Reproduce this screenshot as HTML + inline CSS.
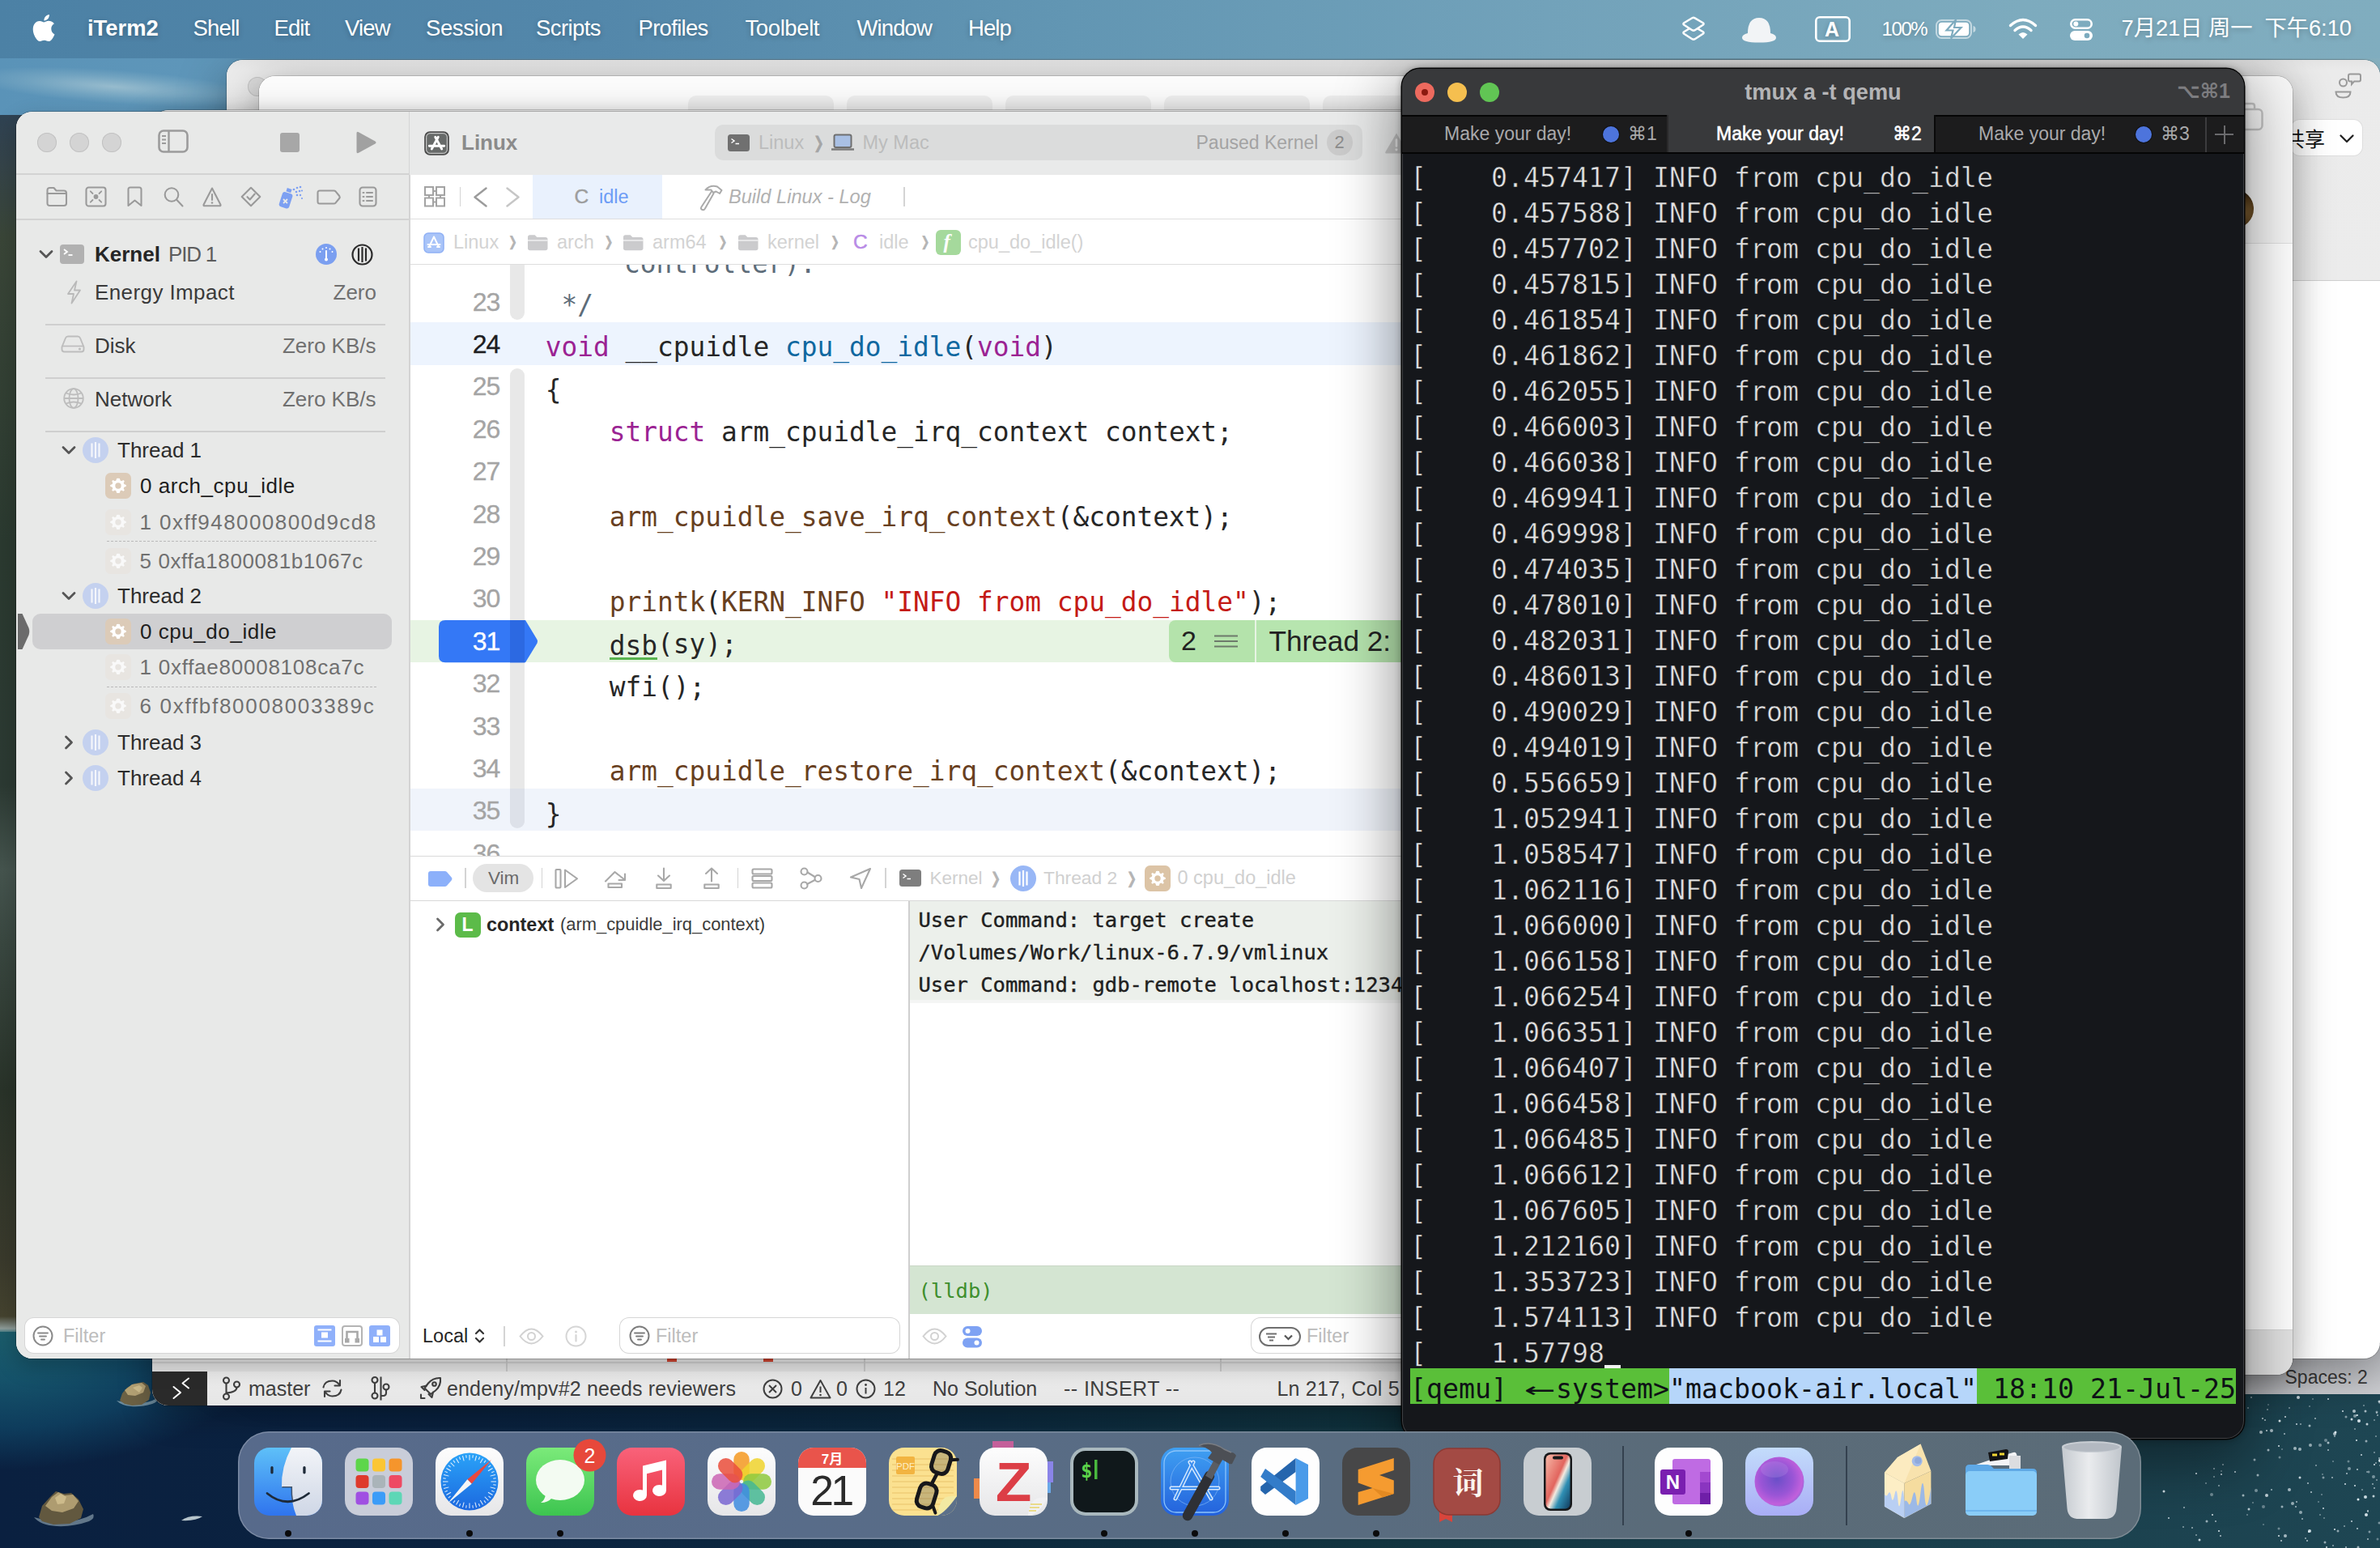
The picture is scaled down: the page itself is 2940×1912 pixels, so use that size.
<!DOCTYPE html>
<html lang="en">
<head>
<meta charset="utf-8">
<title>Desktop</title>
<style>
*{box-sizing:border-box;margin:0;padding:0}
html,body{width:2940px;height:1912px;overflow:hidden;background:#0d2744}
body{position:relative;font-family:"Liberation Sans","Noto Sans CJK SC",sans-serif;color:#222}
.abs{position:absolute}
.t{position:absolute;white-space:pre;line-height:1}
svg{position:absolute;overflow:visible}
/* wallpaper */
#wall{position:absolute;left:0;top:0;width:2940px;height:1912px;
 background:linear-gradient(90deg,#0a2040 0%,#0b2340 20%,#0d2a3e 42%,#12343f 58%,#1a3f4c 80%,#1e4653 100%)}
#sky{position:absolute;left:0;top:0;width:2940px;height:145px;background:linear-gradient(90deg,#5a93b8,#79a9c1 60%,#8ab6c6)}
#cloud{position:absolute;left:-40px;top:86px;width:360px;height:42px;transform:rotate(4deg);background:radial-gradient(ellipse 50% 50% at 50% 50%,rgba(170,200,212,.75),rgba(150,188,205,.35) 60%,transparent 100%)}
#mount{position:absolute;left:0;top:142px;width:60px;height:1505px;background:linear-gradient(180deg,#2f4252 0,#35444a 4%,#3a4638 10%,#2b3a30 35%,#2c3a33 55%,#46554f 62%,#3a4841 68%,#293329 80%,#3a3a2c 94%,#45432f 98.6%,#8f9d9a 99.6%,#2d6f7a 100%)}
#sea1{position:absolute;left:0;top:1645px;width:700px;height:267px;background:radial-gradient(ellipse 340px 170px at 0 0,#1b5d6b 0,#15526a 35%,#0e3c5c 70%,rgba(10,33,66,0) 100%)}
#spark{position:absolute;left:2650px;top:1725px;width:2px;height:2px;border-radius:50%;background:transparent;box-shadow:147px 28px 0 0px rgba(235,245,250,0.74),257px 17px 0 1px rgba(235,245,250,0.7),171px 45px 0 0px rgba(235,245,250,0.68),258px 23px 0 1px rgba(235,245,250,0.48),280px 107px 0 0px rgba(235,245,250,0.59),46px 160px 0 0px rgba(235,245,250,0.52),200px 106px 0 0px rgba(235,245,250,0.69),74px 106px 0 0px rgba(235,245,250,0.46),202px 11px 0 0px rgba(235,245,250,0.39),190px 99px 0 0.5px rgba(235,245,250,0.82),210px 84px 0 0px rgba(235,245,250,0.53),233px 45px 0 1px rgba(235,245,250,0.69),190px 64px 0 1px rgba(235,245,250,0.62),286px 22px 0 0px rgba(235,245,250,0.6),93px 91px 0 0px rgba(235,245,250,0.37),246px 107px 0 0px rgba(235,245,250,0.88),151px 65px 0 0.5px rgba(235,245,250,0.65),132px 130px 0 0px rgba(235,245,250,0.39),223px 185px 0 0px rgba(235,245,250,0.84),237px 165px 0 0.5px rgba(235,245,250,0.56),155px 114px 0 0px rgba(235,245,250,0.65),247px 24px 0 0.5px rgba(235,245,250,0.5),275px 92px 0 0.5px rgba(235,245,250,0.45),202px 165px 0 1px rgba(235,245,250,0.84),134px 77px 0 0.5px rgba(235,245,250,0.57),282px 28px 0 0px rgba(235,245,250,0.46),225px 2px 0 0px rgba(235,245,250,0.85),130px 0px 0 0px rgba(235,245,250,0.6),215px 59px 0 1px rgba(235,245,250,0.43),281px 122px 0 0.5px rgba(235,245,250,0.79),272px 145px 0 1px rgba(235,245,250,0.87),165px 74px 0 0.5px rgba(235,245,250,0.41),151px 9px 0 0px rgba(235,245,250,0.35),199px 177px 0 0px rgba(235,245,250,0.72),267px 114px 0 0px rgba(235,245,250,0.44),282px 112px 0 0px rgba(235,245,250,0.63),262px 185px 0 0.5px rgba(235,245,250,0.63),144px 26px 0 0px rgba(235,245,250,0.8),186px 129px 0 0px rgba(235,245,250,0.66),281px 98px 0 1px rgba(235,245,250,0.44),274px 141px 0 0px rgba(235,245,250,0.53),233px 48px 0 0px rgba(235,245,250,0.57),155px 41px 0 1px rgba(235,245,250,0.67),149px 41px 0 0px rgba(235,245,250,0.84),254px 153px 0 0px rgba(235,245,250,0.79),110px 92px 0 0px rgba(235,245,250,0.79),251px 88px 0 1px rgba(235,245,250,0.47),282px 83px 0 0px rgba(235,245,250,0.91),282px 68px 0 0px rgba(235,245,250,0.48),184px 63px 0 1px rgba(235,245,250,0.64),261px 89px 0 0px rgba(235,245,250,0.74),260px 22px 0 0px rgba(235,245,250,0.58),186px 33px 0 0px rgba(235,245,250,0.82),66px 176px 0 0.5px rgba(235,245,250,0.78),167px 177px 0 0px rgba(235,245,250,0.78),288px 5px 0 0.5px rgba(235,245,250,0.7),254px 27px 0 0.5px rgba(235,245,250,0.85),225px 65px 0 0px rgba(235,245,250,0.68),28px 149px 0 0px rgba(235,245,250,0.79),197px 174px 0 0px rgba(235,245,250,0.61),258px 39px 0 0px rgba(235,245,250,0.5),191px 142px 0 1px rgba(235,245,250,0.55),172px 24px 0 0px rgba(235,245,250,0.9),271px 123px 0 1px rgba(235,245,250,0.84),172px 171px 0 1px rgba(235,245,250,0.65),93px 95px 0 0px rgba(235,245,250,0.87),215px 145px 0 0px rgba(235,245,250,0.44),185px 135px 0 0px rgba(235,245,250,0.68),230px 99px 0 0px rgba(235,245,250,0.64),269px 10px 0 0px rgba(235,245,250,0.46),248px 94px 0 0px rgba(235,245,250,0.69),177px 114px 0 1px rgba(235,245,250,0.65),193px 150px 0 0px rgba(235,245,250,0.65),233px 163px 0 0px rgba(235,245,250,0.92),276px 166px 0 0.5px rgba(235,245,250,0.47),177px 13px 0 0px rgba(235,245,250,0.49),82px 145px 0 0px rgba(235,245,250,0.91),90px 165px 0 0px rgba(235,245,250,0.93),243px 17px 0 0px rgba(235,245,250,0.88),288px 155px 0 0.5px rgba(235,245,250,0.45),288px 75px 0 0px rgba(235,245,250,0.6),145px 135px 0 1px rgba(235,245,250,0.36),181px 131px 0 1px rgba(235,245,250,0.58),218px 95px 0 0px rgba(235,245,250,0.39),285px 19px 0 0px rgba(235,245,250,0.51),273px 33px 0 0.5px rgba(235,245,250,0.8),262px 126px 0 0.5px rgba(235,245,250,0.92),92px 171px 0 0px rgba(235,245,250,0.69),231px 79px 0 0px rgba(235,245,250,0.39),220px 149px 0 0px rgba(235,245,250,0.4),57px 161px 0 0px rgba(235,245,250,0.62),289px 78px 0 1px rgba(235,245,250,0.9),84px 98px 0 0px rgba(235,245,250,0.49),284px 48px 0 0px rgba(235,245,250,0.46),219px 99px 0 0.5px rgba(235,245,250,0.47),191px 33px 0 0px rgba(235,245,250,0.56),289px 6px 0 1px rgba(235,245,250,0.36),202px 35px 0 0.5px rgba(235,245,250,0.63),75px 153px 0 0.5px rgba(235,245,250,0.61),201px 166px 0 0px rgba(235,245,250,0.93),231px 183px 0 0px rgba(235,245,250,0.56),168px 64px 0 0px rgba(235,245,250,0.38),22px 116px 0 0.5px rgba(235,245,250,0.88),261px 162px 0 0px rgba(235,245,250,0.75),213px 129px 0 0px rgba(235,245,250,0.38),95px 83px 0 0px rgba(235,245,250,0.51),285px 102px 0 0px rgba(235,245,250,0.5),150px 15px 0 0px rgba(235,245,250,0.52),125px 145px 0 0px rgba(235,245,250,0.4),90px 109px 0 0px rgba(235,245,250,0.59),142px 43px 0 1px rgba(235,245,250,0.7),263px 29px 0 1px rgba(235,245,250,0.89),164px 60px 0 0px rgba(235,245,250,0.94),136px 115px 0 1px rgba(235,245,250,0.44),219px 137px 0 0px rgba(235,245,250,0.84),274px 140px 0 0px rgba(235,245,250,0.69),258px 109px 0 0px rgba(235,245,250,0.89),221px 179px 0 0.5px rgba(235,245,250,0.58),204px 117px 0 0px rgba(235,245,250,0.73),188px 0px 0 1px rgba(235,245,250,0.83),271px 17px 0 0.5px rgba(235,245,250,0.67),126px 13px 0 0px rgba(235,245,250,0.51),120px 121px 0 0.5px rgba(235,245,250,0.63),62px 170px 0 0px rgba(235,245,250,0.52),217px 120px 0 0px rgba(235,245,250,0.4),149px 121px 0 1px rgba(235,245,250,0.77),206px 2px 0 0px rgba(235,245,250,0.39),285px 18px 0 0.5px rgba(235,245,250,0.48),138px 96px 0 0.5px rgba(235,245,250,0.63),247px 185px 0 0px rgba(235,245,250,0.68),286px 175px 0 0.5px rgba(235,245,250,0.36),62px 94px 0 0px rgba(235,245,250,0.95),164px 171px 0 0px rgba(235,245,250,0.91),209px 26px 0 0px rgba(235,245,250,0.66),86px 153px 0 0px rgba(235,245,250,0.66),234px 43px 0 0.5px rgba(235,245,250,0.89),165px 29px 0 0.5px rgba(235,245,250,0.92),168px 135px 0 0.5px rgba(235,245,250,0.6),145px 157px 0 0px rgba(235,245,250,0.35),261px 22px 0 0px rgba(235,245,250,0.91),272px 54px 0 0.5px rgba(235,245,250,0.57),164px 162px 0 0.5px rgba(235,245,250,0.4),245px 159px 0 0px rgba(235,245,250,0.52),260px 53px 0 0px rgba(235,245,250,0.91),284px 81px 0 0px rgba(235,245,250,0.54),250px 79px 0 0.5px rgba(235,245,250,0.37),274px 175px 0 0px rgba(235,245,250,0.68),47px 136px 0 0px rgba(235,245,250,0.62),222px 53px 0 1px rgba(235,245,250,0.38),84px 88px 0 0px rgba(235,245,250,0.56),127px 138px 0 0.5px rgba(235,245,250,0.74),225px 56px 0 0.5px rgba(235,245,250,0.68),81px 120px 0 1px rgba(235,245,250,0.4),273px 92px 0 0px rgba(235,245,250,0.48),289px 84px 0 0px rgba(235,245,250,0.43),203px 59px 0 1px rgba(235,245,250,0.57),266px 71px 0 0px rgba(235,245,250,0.8)}
/* menubar */
#menubar{position:absolute;left:0;top:0;width:2940px;height:72px;background:linear-gradient(90deg,#4c81a5 0,#5387aa 25%,#6296b3 45%,#72a2ba 65%,#7dabbe 85%,#80adbf 100%)}
#menubar .t{color:#fff;font-size:27.5px;top:21px;text-shadow:0 2px 6px rgba(0,0,0,.25)}
/* windows */
.win{position:absolute;border-radius:20px}
#winA{left:280px;top:74px;width:2660px;height:1604px;background:#fff;box-shadow:0 0 0 1px rgba(0,0,0,.18),0 20px 60px rgba(0,0,0,.35);overflow:hidden}
#winAbar{position:absolute;left:280px;top:1660px;width:2660px;height:62px;background:linear-gradient(180deg,#bfc1c6,#cfd0d4);}
#winB{left:320px;top:94px;width:2512px;height:1604px;background:#fff;box-shadow:0 0 0 1px rgba(0,0,0,.15),0 10px 50px rgba(0,0,0,.35);overflow:hidden}
#vsc{left:188px;top:136px;width:2000px;height:1600px;background:#e3e3e3;border-radius:20px;box-shadow:0 0 0 1px rgba(0,0,0,.2),0 10px 40px rgba(0,0,0,.3);overflow:hidden}
#xc{left:20px;top:138px;width:1900px;height:1540px;background:#fff;box-shadow:0 0 0 1px rgba(0,0,0,.22),0 10px 28px rgba(0,0,0,.22);overflow:hidden}
#term{left:1732px;top:85px;width:1040px;height:1692px;background:#15171b;border-radius:22px;box-shadow:0 0 0 1.5px #050505,inset 0 0 0 1px rgba(255,255,255,.18),0 0 9px 1px rgba(0,0,0,.32),0 22px 75px 8px rgba(0,0,0,.42);overflow:hidden}
#dock{position:absolute;left:294px;top:1768px;width:2351px;height:133px;border-radius:38px;background:linear-gradient(90deg,#576a8b 0,#586c89 30%,#596c80 58%,#5a6b79 75%,#5b6c78 100%);box-shadow:inset 0 0 0 1.5px rgba(255,255,255,.22)}

.tabt{top:69px;font-size:23px;font-family:"Liberation Sans","DejaVu Sans",sans-serif}
.tdot{top:71px;width:20px;height:20px;border-radius:50%;background:#4d74dc;box-shadow:0 0 0 1px rgba(0,0,0,.4)}
#tpre,#tstat{position:absolute;left:10px;font:33.22px/44px "DejaVu Sans Mono","Liberation Mono",monospace;white-space:pre}
#tpre{top:113px;color:#e2e2e2;-webkit-text-stroke:.5px #15171b}
#tstat{top:1609px;color:#0e1116}
.arr{display:inline-block;width:40px;text-align:center;transform:scaleX(1.9)}
#xci{position:absolute;left:-20px;top:-138px;width:2940px;height:1912px}
.vst{top:1566.8px;font-size:25px;color:#3f3f3f}
</style>
</head>
<body>
<div id="wall"></div>
<div id="sky"></div>
<div id="mount"></div>
<div id="sea1"></div>
<div id="cloud"></div>
<div id="spark"></div>
<svg style="left:140px;top:1700px" width="60" height="46" viewBox="0 0 60 46"><path d="M4 30q6 6 18 7t26-3q8-3 6-7-10 6-24 6T4 30z" fill="#b9cdd3" opacity=".55"/><path d="M8 30l3-9 6-7 9-5 11-2 6 4 3 9-2 9-9 6-12 1-9-2z" fill="#6d6245"/><path d="M14 17l9-7 12-2 5 4-3 8-10 4-9-1z" fill="#b7a476"/><path d="M24 14l8-3 4 3-4 6z" fill="#d2c08f"/></svg>
<svg style="left:38px;top:1832px" width="84" height="60" viewBox="0 0 84 60"><path d="M4 42q8 10 28 11t40-6q8-4 5-9-16 9-36 9T4 42z" fill="#b9cdd3" opacity=".5"/><path d="M10 42l4-14 9-10 8-8 10 3 9-1 9 8 6 12-3 11-14 7-20 1-14-4z" fill="#62583f"/><path d="M18 28l8-11 8-6 8 4 10-1 7 8-6 9-14 5-13-2z" fill="#ae9c70"/><path d="M30 18l7-5 7 4-3 8-8 1z" fill="#cdbb8b"/></svg>
<svg style="left:222px;top:1870px" width="30" height="12" viewBox="0 0 30 12"><path d="M2 8q10-7 26-5-8 6-26 5z" fill="#c9d6da" opacity=".9"/></svg>
<div id="winAbar"></div>
<div class="t" style="left:2822.5px;top:1690px;font-size:23px;color:#3a3a3a">Spaces: 2</div>
<div class="win" id="winA">
 <div class="abs" style="left:0;top:0;width:2660px;height:273px;background:linear-gradient(180deg,#e4e4e4 0,#ebebeb 14px,#ececec 100%);border-bottom:1.5px solid #cfcfcf"></div>
 <div class="abs" style="left:26px;top:21px;width:24px;height:24px;border-radius:50%;background:#dcdcdc;box-shadow:inset 0 0 0 1px #c6c6c6"></div>
 <div class="abs" style="left:2550px;top:74px;width:88px;height:44px;border-radius:11px;background:#fff;box-shadow:0 0 0 1px #dedede"></div>
 <div class="t" style="left:2542px;top:83.500px;font-size:25px;color:#111;font-family:'Noto Sans CJK SC','Liberation Sans',sans-serif">共享</div>
 <svg style="left:2610px;top:92px" width="18" height="11" viewBox="0 0 18 11"><path d="M1.500 1.500l7.500 7.500 7.500-7.500" fill="none" stroke="#222" stroke-width="2.300" stroke-linecap="round" stroke-linejoin="round"/></svg>
 <svg style="left:2604px;top:16px" width="33" height="32" viewBox="0 0 33 32"><g fill="none" stroke="#9a9a9a" stroke-width="2"><circle cx="10.500" cy="12" r="4.500"/><path d="M1.500 23.500q0 7 9 7t9-7z"/><path d="M19 1.500h11q2 0 2 2v5q0 2-2 2h-6l-3 3.500v-3.500h-2q-2 0-2-2v-5q0-2 2-2z"/></g></svg>
</div>
<div class="win" id="winB">
 <div class="abs" style="left:0;top:0;width:2512px;height:207px;background:#f7f7f7;border-bottom:1.5px solid #e2e2e2"></div>
 <div class="abs" style="left:0;top:0;width:1500px;height:60px;background:#fbfbfb"></div>
 <div class="abs" style="left:530px;top:24px;width:180px;height:40px;border-radius:10px;background:#eeeeee"></div>
 <div class="abs" style="left:726px;top:24px;width:180px;height:40px;border-radius:10px;background:#eeeeee"></div>
 <div class="abs" style="left:922px;top:24px;width:180px;height:40px;border-radius:10px;background:#eeeeee"></div>
 <div class="abs" style="left:1118px;top:24px;width:180px;height:40px;border-radius:10px;background:#eeeeee"></div>
 <div class="abs" style="left:1314px;top:24px;width:180px;height:40px;border-radius:10px;background:#eeeeee"></div>
 <div class="abs" style="left:2416px;top:140px;width:48px;height:48px;border-radius:50%;background:radial-gradient(circle at 70% 60%,#8a6a3a 0,#5a3f1c 40%,#0c0906 70%)"></div>
 <svg style="left:2440px;top:32px" width="36" height="36" viewBox="0 0 36 36"><g fill="none" stroke="#c4c4c4" stroke-width="2.500"><rect x="1.500" y="9" width="33" height="25" rx="5"/><path d="M11 9V5q0-3 3-3h8q3 0 3 3v4"/></g></svg>
 <div class="abs" style="left:0;top:1548px;width:2512px;height:56px;background:#e3e3e3;border-top:1px solid #d6d6d6"></div>
</div>
<div class="win" id="vsc">
 <div class="abs" style="left:0;top:0;width:2000px;height:1558px;background:#e2e2e2"></div>
 <div class="abs" style="left:0;top:1546px;width:2000px;height:1.5px;background:#cfcfcf"></div>
 <div class="abs" style="left:437px;top:1540px;width:1.5px;height:18px;background:#c8c8c8"></div>
 <div class="abs" style="left:879px;top:1540px;width:1.5px;height:18px;background:#c8c8c8"></div>
 <div class="abs" style="left:1319px;top:1540px;width:1.5px;height:18px;background:#c8c8c8"></div>
 <div class="abs" style="left:636px;top:1542px;width:12px;height:4px;background:#c8402c"></div>
 <div class="abs" style="left:755px;top:1542px;width:12px;height:4px;background:#c8402c"></div>
 <div class="abs" style="left:0;top:1558px;width:2000px;height:42px;background:linear-gradient(180deg,#ececec,#e6e6e6)"></div>
 <div class="abs" style="left:0;top:1558px;width:68px;height:42px;background:#2a2a2a"></div>
 <svg style="left:25px;top:1565px" width="22" height="28" viewBox="0 0 22 28"><path d="M1.500 12l8.500 7-8.500 7M20 1.500l-7.500 6 7.500 6" fill="none" stroke="#fff" stroke-width="2" stroke-linecap="round" stroke-linejoin="round"/></svg>
 <svg style="left:86px;top:1564px" width="24" height="30" viewBox="0 0 24 30"><g fill="none" stroke="#3f3f3f" stroke-width="2.100"><circle cx="5.500" cy="5" r="3.500"/><circle cx="5.500" cy="25" r="3.500"/><circle cx="18.500" cy="10" r="3.500"/><path d="M5.500 8.500v13M18.500 13.500q0 6-13 7"/></g></svg>
 <div class="t vst" style="left:119px">master</div>
 <svg style="left:208px;top:1566px" width="29" height="26" viewBox="0 0 29 26"><g fill="none" stroke="#3f3f3f" stroke-width="2.100" stroke-linecap="round" stroke-linejoin="round"><path d="M3.500 11.500q1.500-8 11-8 5.500 0 9 5.500M25.500 14.500q-1.500 8-11 8-5.500 0-9-5.500"/><path d="M24 3v6.500h-6.500M5 23v-6.500h6.500"/></g></svg>
 <svg style="left:269px;top:1563px" width="25" height="32" viewBox="0 0 25 32"><g fill="none" stroke="#3f3f3f" stroke-width="2.100"><circle cx="6" cy="5.500" r="3.500"/><circle cx="6" cy="25" r="3.500"/><circle cx="20" cy="14" r="3.500"/><path d="M6 9v12.500M13.500 1.500v29M20 17.500v4q0 3-3 3.500h-3.500"/></g></svg>
 <svg style="left:330px;top:1564px" width="28" height="30" viewBox="0 0 28 30"><g fill="none" stroke="#3f3f3f" stroke-width="2.100" stroke-linejoin="round" stroke-linecap="round"><path d="M26 2q-9-.500-15 6.500L6.500 14.500l7.500 7.500 6-4.500q7-6 6-15.500z"/><path d="M9 11.500l-6.500 1.500 4 4M17 19.500l-1.500 6.500-4-4M2 22.500v4.500h4.500"/><circle cx="18.500" cy="9.500" r="2.300"/></g></svg>
 <div class="t vst" style="left:364px;letter-spacing:.15px">endeny/mpv#2 needs reviewers</div>
 <svg style="left:754px;top:1567px" width="25" height="25" viewBox="0 0 25 25"><g fill="none" stroke="#3f3f3f" stroke-width="2"><circle cx="12.500" cy="12.500" r="11"/><path d="M8 8l9 9M17 8l-9 9"/></g></svg>
 <div class="t vst" style="left:789px">0</div>
 <svg style="left:812px;top:1567px" width="27" height="25" viewBox="0 0 27 25"><g fill="none" stroke="#3f3f3f" stroke-width="2" stroke-linejoin="round"><path d="M13.500 2L25.500 23.500H1.500z"/><path d="M13.500 9.500v7.500"/></g><circle cx="13.500" cy="20" r="1.300" fill="#3f3f3f"/></svg>
 <div class="t vst" style="left:845px">0</div>
 <svg style="left:869px;top:1567px" width="25" height="25" viewBox="0 0 25 25"><g fill="none" stroke="#3f3f3f" stroke-width="2"><circle cx="12.500" cy="12.500" r="11"/><path d="M12.500 11v7.500"/></g><circle cx="12.500" cy="7.500" r="1.400" fill="#3f3f3f"/></svg>
 <div class="t vst" style="left:903px">12</div>
 <div class="t vst" style="left:964px">No Solution</div>
 <div class="t vst" style="left:1126px;letter-spacing:.45px">-- INSERT --</div>
 <div class="t vst" style="left:1389.500px;letter-spacing:.2px">Ln 217, Col 5</div>
</div>
<div class="win" id="xc"><div id="xci">
<div class="abs" style="left:20px;top:138px;width:486px;height:1540px;background:#e8e9e8;"></div>
<div class="abs" style="left:505px;top:138px;width:1.5px;height:1540px;background:#d4d4d4;"></div>
<div class="abs" style="left:506px;top:138px;width:1400px;height:78px;background:#e9eaea;"></div>
<div class="abs" style="left:20px;top:213.5px;width:485px;height:2px;background:#d3d3d3;"></div>
<div class="abs" style="left:20px;top:270px;width:485px;height:2px;background:#d3d3d3;"></div>
<div class="abs" style="left:46px;top:164px;width:24px;height:24px;background:#d4d4d4;border-radius:50%;box-shadow:inset 0 0 0 1px #c2c2c2"></div>
<div class="abs" style="left:86px;top:164px;width:24px;height:24px;background:#d4d4d4;border-radius:50%;box-shadow:inset 0 0 0 1px #c2c2c2"></div>
<div class="abs" style="left:126px;top:164px;width:24px;height:24px;background:#d4d4d4;border-radius:50%;box-shadow:inset 0 0 0 1px #c2c2c2"></div>
<svg style="left:195px;top:160px;" width="38" height="29" viewBox="0 0 38 29"><rect x="1.5" y="1.5" width="35" height="26" rx="5.5" fill="none" stroke="#9b9b9b" stroke-width="2.6"/><path d="M13.5 2v25" stroke="#9b9b9b" stroke-width="2.4"/><path d="M5 8h5M5 12.5h5M5 17h5" stroke="#9b9b9b" stroke-width="1.8"/></svg>
<div class="abs" style="left:346px;top:164px;width:24px;height:24px;background:#a7a7a7;border-radius:3px"></div>
<svg style="left:438px;top:161px;" width="29" height="30" viewBox="0 0 29 30"><path d="M2.5 3.5 L2.5 26.5 Q2.5 29 5 27.7 L25.5 16.6 Q27.5 15 25.5 13.4 L5 2.3 Q2.5 1 2.5 3.5Z" fill="#a1a1a1"/></svg>
<svg style="left:57px;top:230px;" width="27" height="26" viewBox="0 0 27 26"><path d="M1.5 7.5V5q0-3 3-3h5l3 3.5h9.5q3 0 3 3V21q0 3-3 3h-17.5q-3 0-3-3z" fill="none" stroke="#9a9a9a" stroke-width="2.1" stroke-linejoin="round" stroke-linecap="round"/><path d="M1.5 9h23.5" fill="none" stroke="#9a9a9a" stroke-width="2.1" stroke-linejoin="round" stroke-linecap="round"/></svg>
<svg style="left:104.5px;top:230px;" width="27" height="26" viewBox="0 0 27 26"><rect x="1.5" y="1.5" width="24" height="23" rx="3" fill="none" stroke="#9a9a9a" stroke-width="2.1" stroke-linejoin="round" stroke-linecap="round"/><path d="M6.800 6.300l2.700 2.700M20.200 6.300l-2.700 2.700M6.800 19.700l2.700-2.700M20.200 19.700l-2.700-2.700" fill="none" stroke="#9a9a9a" stroke-width="1.800" stroke-linecap="round"/><circle cx="13.500" cy="13" r="2.900" fill="#9a9a9a"/></svg>
<svg style="left:156.5px;top:230px;" width="19" height="26" viewBox="0 0 19 26"><path d="M1.5 24V4q0-2.5 2.5-2.5h11q2.5 0 2.5 2.5v20l-8-6.5z" fill="none" stroke="#9a9a9a" stroke-width="2.1" stroke-linejoin="round" stroke-linecap="round"/></svg>
<svg style="left:202px;top:230px;" width="25" height="26" viewBox="0 0 25 26"><circle cx="10" cy="10.5" r="8.3" fill="none" stroke="#9a9a9a" stroke-width="2.1" stroke-linejoin="round" stroke-linecap="round"/><path d="M16.5 17l7 7.5" fill="none" stroke="#9a9a9a" stroke-width="2.1" stroke-linejoin="round" stroke-linecap="round" stroke-width="2.8"/></svg>
<svg style="left:250px;top:230px;" width="24" height="26" viewBox="0 0 24 26"><path d="M12 2.5L22.3 22.5q.8 1.8-1.2 1.8H2.9q-2 0-1.2-1.8z" fill="none" stroke="#9a9a9a" stroke-width="2.1" stroke-linejoin="round" stroke-linecap="round"/><path d="M12 10v7" fill="none" stroke="#9a9a9a" stroke-width="2.1" stroke-linejoin="round" stroke-linecap="round"/><circle cx="12" cy="20.5" r="1.3" fill="#9a9a9a"/></svg>
<svg style="left:297px;top:230px;" width="26" height="26" viewBox="0 0 26 26"><path d="M13 1.8L24.3 13 13 24.2 1.7 13z" fill="none" stroke="#9a9a9a" stroke-width="2.1" stroke-linejoin="round" stroke-linecap="round"/><path d="M8.5 13.2l3.2 3.3 6-7" fill="none" stroke="#9a9a9a" stroke-width="2.1" stroke-linejoin="round" stroke-linecap="round"/></svg>
<svg style="left:343px;top:229px;" width="32" height="28" viewBox="0 0 32 28"><g transform="rotate(18 11 17)"><rect x="4" y="9" width="13" height="19" rx="3" fill="#7da0f2"/><rect x="7.5" y="3.5" width="6" height="4.5" fill="#7da0f2"/></g><path d="M7 17l5 5M12 17l-5 5" stroke="#e8e9e8" stroke-width="1.8"/><g fill="#7da0f2"><circle cx="20" cy="5" r="1.3"/><circle cx="24" cy="3" r="1.3"/><circle cx="28" cy="2" r="1.3"/><circle cx="23" cy="8" r="1.3"/><circle cx="27" cy="7" r="1.3"/><circle cx="30" cy="6.5" r="1.1"/><circle cx="24" cy="12" r="1.3"/><circle cx="28" cy="12" r="1.2"/><circle cx="30" cy="16" r="1.1"/></g></svg>
<svg style="left:391px;top:234px;" width="30" height="19" viewBox="0 0 30 19"><path d="M1.5 4q0-2.5 2.5-2.5h17.5q1.2 0 2 .8l4.7 5.7q1 1.5 0 3l-4.7 5.7q-.8.8-2 .8H4q-2.5 0-2.5-2.5z" fill="none" stroke="#9a9a9a" stroke-width="2.1" stroke-linejoin="round" stroke-linecap="round"/></svg>
<svg style="left:443px;top:230px;" width="23" height="26" viewBox="0 0 23 26"><rect x="1.5" y="1.5" width="20" height="23" rx="3.5" fill="none" stroke="#9a9a9a" stroke-width="2.1" stroke-linejoin="round" stroke-linecap="round"/><path d="M10 8h7M10 13h7M10 18h7" fill="none" stroke="#9a9a9a" stroke-width="2.1" stroke-linejoin="round" stroke-linecap="round" stroke-width="2"/><path d="M5.5 8h1M5.5 13h1M5.5 18h1" fill="none" stroke="#9a9a9a" stroke-width="2.1" stroke-linejoin="round" stroke-linecap="round" stroke-width="2"/></svg>
<svg style="left:47.5px;top:308px;" width="18" height="12" viewBox="0 0 18 12"><path d="M2 2.5l7 7 7-7" fill="none" stroke="#555" stroke-width="2.8" stroke-linecap="round" stroke-linejoin="round"/></svg>
<svg style="left:74px;top:302px;" width="30" height="24" viewBox="0 0 30 24"><rect x="0" y="0" width="30" height="24" rx="4" fill="#b1b1b1"/><path d="M5 6l4 3-4 3" fill="none" stroke="#fff" stroke-width="1.8"/><path d="M10.5 13h5" stroke="#fff" stroke-width="1.8"/></svg>
<div class="t " style="left:117px;top:301.3px;font-size:26px;color:#262626;font-weight:700">Kernel</div>
<div class="t " style="left:208px;top:301.3px;font-size:26px;color:#5c5c5c;letter-spacing:-1.2px">PID 1</div>
<svg style="left:390px;top:301px;" width="26" height="26" viewBox="0 0 26 26"><circle cx="13" cy="13" r="13" fill="#7b9ff0"/><path d="M13 9v10" stroke="#fff" stroke-width="2" stroke-linecap="round"/><circle cx="13" cy="19.5" r="2" fill="#fff"/><g fill="#fff"><circle cx="13" cy="5" r="1"/><circle cx="8.5" cy="6.5" r="1"/><circle cx="17.5" cy="6.5" r="1"/><circle cx="5.500" cy="10" r="1"/><circle cx="20.5" cy="10" r="1"/></g></svg>
<svg style="left:433.5px;top:300.5px;" width="27" height="27" viewBox="0 0 27 27"><circle cx="13.5" cy="13.5" r="12" fill="none" stroke="#2b2b2b" stroke-width="2.2"/><path d="M9 5.500v16M13.500 4v19M18 5.500v16" stroke="#2b2b2b" stroke-width="2.2"/></svg>
<svg style="left:82px;top:346px;" width="19" height="30" viewBox="0 0 19 30"><path d="M12.500 1.500L2 17h7L6.500 28.500 17 12.500h-7z" fill="none" stroke="#b9b9b9" stroke-width="1.8" stroke-linejoin="round"/></svg>
<div class="t " style="left:117px;top:348.3px;font-size:26px;color:#3a3a3a;letter-spacing:.4px">Energy Impact</div>
<div class="t" style="right:2475px;top:348.3px;font-size:26px;color:#707070;">Zero</div>
<div class="abs" style="left:56px;top:400px;width:420px;height:1.8px;background:#cfcfcf;"></div>
<div class="abs" style="left:56px;top:466.3px;width:420px;height:1.8px;background:#cfcfcf;"></div>
<div class="abs" style="left:56px;top:532px;width:420px;height:1.8px;background:#cfcfcf;"></div>
<svg style="left:75px;top:414px;" width="30" height="22" viewBox="0 0 30 22"><path d="M1.500 14.500L6 3.500q.8-2 3-2h12q2.200 0 3 2l4.500 11v3q0 3-3 3h-21q-3 0-3-3z" fill="none" stroke="#bdbdbd" stroke-width="1.9" stroke-linejoin="round"/><path d="M1.500 13.500h27" stroke="#bdbdbd" stroke-width="1.7"/><circle cx="23.500" cy="17" r="1.600" fill="#bdbdbd"/></svg>
<div class="t " style="left:117px;top:414.3px;font-size:26px;color:#3a3a3a;">Disk</div>
<div class="t" style="right:2475.5px;top:414.3px;font-size:26px;color:#707070;">Zero KB/s</div>
<svg style="left:78px;top:478.5px;" width="26" height="26" viewBox="0 0 26 26"><g fill="none" stroke="#bdbdbd" stroke-width="1.800"><circle cx="13" cy="13" r="11.800"/><ellipse cx="13" cy="13" rx="5.500" ry="11.800"/><path d="M1.500 13h23M3.500 6.500q9.500 4 19 0M3.500 19.500q9.500-4 19 0"/></g></svg>
<div class="t " style="left:117px;top:480.3px;font-size:26px;color:#3a3a3a;">Network</div>
<div class="t" style="right:2475.5px;top:480.3px;font-size:26px;color:#707070;">Zero KB/s</div>
<div class="abs" style="left:40px;top:758px;width:444px;height:44px;background:#cfcfd1;border-radius:10px"></div>
<svg style="left:22px;top:758px;" width="15" height="44" viewBox="0 0 15 44"><path d="M0 0h5.500l8 17.500q1.500 4.500 0 9l-8 17.500H0z" fill="#6b6b6b"/></svg>
<svg style="left:76px;top:550px;" width="18" height="12" viewBox="0 0 18 12"><path d="M2 2.5l7 7 7-7" fill="none" stroke="#555" stroke-width="2.8" stroke-linecap="round" stroke-linejoin="round"/></svg>
<svg style="left:102px;top:540px;" width="32" height="32" viewBox="0 0 32 32"><circle cx="16" cy="16" r="16" fill="#c4d1ef"/><path d="M11.500 7.500v17M16 6v20M20.500 7.500v17" stroke="#f4f6fb" stroke-width="2.200"/></svg>
<div class="t " style="left:145px;top:543.3px;font-size:26px;color:#2c2c2c;">Thread 1</div>
<svg style="left:130px;top:584px;" width="32" height="32" viewBox="0 0 32 32"><rect width="32" height="32" rx="6.500" fill="#dccbb8"/><path fill="#fff" d="M16 6.800l1.900.2.700 2.500 1.500.650 2.300-1.250 1.400 1.300-1.100 2.350.650 1.500 2.450.85v1.900l-2.450.85-.650 1.500 1.100 2.350-1.400 1.300-2.300-1.250-1.500.650-.700 2.500-1.900.2-1.900-.2-.700-2.500-1.500-.650-2.300 1.250-1.400-1.300 1.100-2.350-.650-1.500-2.450-.85v-1.900l2.450-.85.650-1.500-1.100-2.350 1.400-1.300 2.300 1.250 1.500-.650.700-2.500zM16 12.300a3.700 3.700 0 100 7.400 3.700 3.700 0 000-7.400z"/></svg>
<div class="t " style="left:173px;top:587.3px;font-size:26px;color:#1e1e1e;letter-spacing:.55px">0 arch_cpu_idle</div>
<svg style="left:130px;top:628.5px;opacity:.75;" width="32" height="32" viewBox="0 0 32 32"><rect width="32" height="32" rx="6.500" fill="#e9e4df"/><path fill="#fff" d="M16 6.800l1.900.2.700 2.500 1.500.650 2.300-1.250 1.400 1.300-1.100 2.350.650 1.500 2.450.85v1.900l-2.450.85-.650 1.500 1.100 2.350-1.400 1.300-2.300-1.250-1.500.650-.700 2.500-1.900.2-1.900-.2-.700-2.500-1.500-.650-2.300 1.250-1.400-1.300 1.100-2.350-.650-1.500-2.450-.85v-1.900l2.450-.85.650-1.500-1.100-2.350 1.400-1.300 2.300 1.250 1.500-.650.700-2.500zM16 12.300a3.700 3.700 0 100 7.400 3.700 3.700 0 000-7.400z"/></svg>
<div class="t " style="left:172.5px;top:631.8px;font-size:26px;color:#707070;letter-spacing:1.45px">1 0xff948000800d9cd8</div>
<svg style="left:130px;top:676.5px;opacity:.75;" width="32" height="32" viewBox="0 0 32 32"><rect width="32" height="32" rx="6.500" fill="#e9e4df"/><path fill="#fff" d="M16 6.800l1.900.2.700 2.500 1.500.650 2.300-1.250 1.400 1.300-1.100 2.350.650 1.500 2.450.85v1.900l-2.450.85-.650 1.500 1.100 2.350-1.400 1.300-2.300-1.250-1.500.650-.700 2.500-1.900.2-1.900-.2-.700-2.500-1.500-.650-2.300 1.250-1.400-1.300 1.100-2.350-.650-1.500-2.450-.85v-1.900l2.450-.85.650-1.500-1.100-2.350 1.400-1.300 2.300 1.250 1.500-.650.700-2.500zM16 12.300a3.700 3.700 0 100 7.400 3.700 3.700 0 000-7.400z"/></svg>
<div class="t " style="left:172.5px;top:679.8px;font-size:26px;color:#707070;letter-spacing:0.6px">5 0xffa1800081b1067c</div>
<svg style="left:76px;top:730px;" width="18" height="12" viewBox="0 0 18 12"><path d="M2 2.5l7 7 7-7" fill="none" stroke="#555" stroke-width="2.8" stroke-linecap="round" stroke-linejoin="round"/></svg>
<svg style="left:102px;top:720px;" width="32" height="32" viewBox="0 0 32 32"><circle cx="16" cy="16" r="16" fill="#c4d1ef"/><path d="M11.500 7.500v17M16 6v20M20.500 7.500v17" stroke="#f4f6fb" stroke-width="2.200"/></svg>
<div class="t " style="left:145px;top:723.3px;font-size:26px;color:#2c2c2c;">Thread 2</div>
<svg style="left:130px;top:764px;" width="32" height="32" viewBox="0 0 32 32"><rect width="32" height="32" rx="6.500" fill="#dccbb8"/><path fill="#fff" d="M16 6.800l1.900.2.700 2.500 1.500.650 2.300-1.250 1.400 1.300-1.100 2.350.650 1.500 2.450.85v1.900l-2.450.85-.650 1.500 1.100 2.350-1.400 1.300-2.300-1.250-1.500.650-.700 2.500-1.900.2-1.900-.2-.700-2.500-1.500-.650-2.300 1.250-1.400-1.300 1.100-2.350-.650-1.500-2.450-.85v-1.900l2.450-.85.650-1.500-1.100-2.350 1.400-1.300 2.300 1.250 1.500-.650.700-2.500zM16 12.300a3.700 3.700 0 100 7.400 3.700 3.700 0 000-7.400z"/></svg>
<div class="t " style="left:173px;top:767.3px;font-size:26px;color:#1e1e1e;letter-spacing:.55px">0 cpu_do_idle</div>
<svg style="left:130px;top:808px;opacity:.75;" width="32" height="32" viewBox="0 0 32 32"><rect width="32" height="32" rx="6.500" fill="#e9e4df"/><path fill="#fff" d="M16 6.800l1.900.2.700 2.500 1.500.650 2.300-1.250 1.400 1.300-1.100 2.350.650 1.500 2.450.85v1.900l-2.450.85-.650 1.500 1.100 2.350-1.400 1.300-2.300-1.250-1.500.650-.700 2.500-1.900.2-1.900-.2-.700-2.500-1.500-.650-2.300 1.250-1.400-1.300 1.100-2.350-.650-1.500-2.450-.85v-1.900l2.450-.85.650-1.500-1.100-2.350 1.400-1.300 2.300 1.250 1.500-.650.700-2.500zM16 12.300a3.700 3.700 0 100 7.400 3.700 3.700 0 000-7.400z"/></svg>
<div class="t " style="left:172.5px;top:811.3px;font-size:26px;color:#707070;letter-spacing:0.75px">1 0xffae80008108ca7c</div>
<svg style="left:130px;top:856px;opacity:.75;" width="32" height="32" viewBox="0 0 32 32"><rect width="32" height="32" rx="6.500" fill="#e9e4df"/><path fill="#fff" d="M16 6.800l1.900.2.700 2.500 1.500.650 2.300-1.250 1.400 1.300-1.100 2.350.650 1.500 2.450.85v1.900l-2.450.85-.650 1.500 1.100 2.350-1.400 1.300-2.300-1.250-1.500.650-.700 2.500-1.900.2-1.900-.2-.700-2.500-1.500-.650-2.300 1.250-1.400-1.300 1.100-2.350-.650-1.500-2.450-.85v-1.900l2.450-.85.650-1.500-1.100-2.350 1.400-1.300 2.300 1.250 1.500-.650.700-2.500zM16 12.300a3.700 3.700 0 100 7.400 3.700 3.700 0 000-7.400z"/></svg>
<div class="t " style="left:172.5px;top:859.3px;font-size:26px;color:#707070;letter-spacing:1.7px">6 0xffbf80008003389c</div>
<svg style="left:79px;top:907.5px;" width="12" height="18" viewBox="0 0 12 18"><path d="M2.5 2l7 7-7 7" fill="none" stroke="#555" stroke-width="2.8" stroke-linecap="round" stroke-linejoin="round"/></svg>
<svg style="left:102px;top:900.5px;" width="32" height="32" viewBox="0 0 32 32"><circle cx="16" cy="16" r="16" fill="#c4d1ef"/><path d="M11.500 7.500v17M16 6v20M20.500 7.500v17" stroke="#f4f6fb" stroke-width="2.200"/></svg>
<div class="t " style="left:145px;top:903.8px;font-size:26px;color:#2c2c2c;">Thread 3</div>
<svg style="left:79px;top:952px;" width="12" height="18" viewBox="0 0 12 18"><path d="M2.5 2l7 7-7 7" fill="none" stroke="#555" stroke-width="2.8" stroke-linecap="round" stroke-linejoin="round"/></svg>
<svg style="left:102px;top:945px;" width="32" height="32" viewBox="0 0 32 32"><circle cx="16" cy="16" r="16" fill="#c4d1ef"/><path d="M11.500 7.500v17M16 6v20M20.500 7.500v17" stroke="#f4f6fb" stroke-width="2.200"/></svg>
<div class="t " style="left:145px;top:948.3px;font-size:26px;color:#2c2c2c;">Thread 4</div>
<div class="abs" style="left:132px;top:668.3px;width:333px;height:0;border-top:1.800px dashed #b9b9b9"></div>
<div class="abs" style="left:132px;top:848.3px;width:333px;height:0;border-top:1.800px dashed #b9b9b9"></div>
<div class="abs" style="left:30.5px;top:1628px;width:462.5px;height:43px;background:#fff;border-radius:11px;box-shadow:0 0 0 1px #d6d6d6"></div>
<svg style="left:40px;top:1637px;" width="26" height="26" viewBox="0 0 26 26"><circle cx="13" cy="13" r="11.500" fill="none" stroke="#8a8a8a" stroke-width="2"/><path d="M7 9.500h12M9 13.500h8M11 17.500h4" stroke="#8a8a8a" stroke-width="1.900" stroke-linecap="round"/></svg>
<div class="t " style="left:78px;top:1638.5px;font-size:23.5px;color:#bcbcbc;">Filter</div>
<svg style="left:388px;top:1637px;" width="26" height="26" viewBox="0 0 26 26"><rect width="26" height="26" rx="3" fill="#8fb0fa"/><rect x="9" y="8.500" width="8" height="7" fill="#fff"/><path d="M4.500 5.500h17M4.500 19.500h17" stroke="#fff" stroke-width="2"/></svg>
<svg style="left:422px;top:1637px;" width="26" height="26" viewBox="0 0 26 26"><rect x="1" y="1" width="24" height="24" rx="3" fill="none" stroke="#b4b4b4" stroke-width="2"/><path d="M6.500 18v-10h13v10" fill="none" stroke="#a9a9a9" stroke-width="2.600"/><rect x="4" y="16" width="5.500" height="5.500" fill="#a9a9a9"/><rect x="16.500" y="16" width="5.500" height="5.500" fill="#a9a9a9"/></svg>
<svg style="left:456px;top:1637px;" width="26" height="26" viewBox="0 0 26 26"><rect width="26" height="26" rx="3" fill="#8fb0fa"/><rect x="9.500" y="5.500" width="7" height="7" fill="#fff"/><rect x="5" y="14" width="7" height="7" fill="#fff"/><rect x="14" y="14" width="7" height="7" fill="#fff"/></svg>
<div class="abs" style="left:506.5px;top:215.5px;width:1400px;height:1463px;background:#fff;"></div>
<svg style="left:523.5px;top:161.5px;" width="31" height="30" viewBox="0 0 31 30"><rect x="1" y="1" width="29" height="28" rx="6" fill="#676a69" stroke="#4a4a4a" stroke-width="1.600"/><rect x="2.700" y="2.700" width="25.600" height="24.600" rx="4.600" fill="none" stroke="#e6e6e6" stroke-width=".900"/><path d="M17.300 7.300L9.300 22M13.700 7.300L21.700 22M6.300 18.300h18.400" fill="none" stroke="#fff" stroke-width="2.900" stroke-linecap="round"/></svg>
<div class="t " style="left:570px;top:163.3px;font-size:26px;color:#8b8b8b;font-weight:700">Linux</div>
<div class="abs" style="left:883px;top:154px;width:800px;height:43.5px;background:#dbdcdc;border-radius:10px"></div>
<svg style="left:898.5px;top:166px;" width="27" height="21" viewBox="0 0 27 21"><rect width="27" height="21" rx="3.500" fill="#707070"/><path d="M4.500 5.500l3.500 2.500-3.500 2.500" fill="none" stroke="#fff" stroke-width="1.500"/><path d="M9.500 11.500h4.500" stroke="#fff" stroke-width="1.500"/></svg>
<div class="t " style="left:937px;top:164.5px;font-size:23.5px;color:#bcbcbc;">Linux</div>
<div class="t " style="left:1003px;top:166.2px;font-size:20px;color:#a5a5a5;font-family:'DejaVu Sans',sans-serif;-webkit-text-stroke:.8px #a5a5a5">❭</div>
<svg style="left:1027px;top:165px;" width="28" height="22" viewBox="0 0 28 22"><rect x="3.500" y="1.500" width="21" height="15.500" rx="2" fill="#a9c0e4" stroke="#6f6f6f" stroke-width="2"/><path d="M0 19.500h28" stroke="#7a7a7a" stroke-width="2.600"/></svg>
<div class="t " style="left:1065.5px;top:164.5px;font-size:23.5px;color:#bcbcbc;">My Mac</div>
<div class="t " style="left:1477.5px;top:164.8px;font-size:23px;color:#a3a3a3;">Paused Kernel</div>
<div class="abs" style="left:1639px;top:160px;width:31.5px;height:31.5px;background:#cbcbcb;border-radius:50%"></div>
<div class="t " style="left:1648.5px;top:165.3px;font-size:22px;color:#8d8d8d;">2</div>
<svg style="left:1710px;top:163px;" width="30" height="27" viewBox="0 0 30 27"><path d="M15 1.500L28.500 24.500q.8 2-1.200 2H2.700q-2 0-1.200-2z" fill="#c3c3c3"/><path d="M15 9.500v8" stroke="#eee" stroke-width="2.600" stroke-linecap="round"/><circle cx="15" cy="21.800" r="1.600" fill="#eee"/></svg>
<div class="abs" style="left:506.5px;top:269.7px;width:1400px;height:1.5px;background:#dedede;"></div>
<div class="abs" style="left:658px;top:215.5px;width:160px;height:54.5px;background:#e9f1fd;"></div>
<svg style="left:523.5px;top:230px;" width="27" height="26" viewBox="0 0 27 26"><g fill="none" stroke="#a3a3a3" stroke-width="2"><rect x="1" y="1" width="10" height="10"/><rect x="15" y="1" width="10" height="10"/><rect x="1" y="14.500" width="10" height="10"/><rect x="15" y="14.500" width="10" height="10"/><path d="M11 6h4M6 11v3.500M20 11v3.500M11 19.500h4"/></g></svg>
<div class="abs" style="left:567.5px;top:231px;width:1.5px;height:24px;background:#d4d4d4;"></div>
<svg style="left:583.5px;top:230.5px;" width="19" height="25" viewBox="0 0 19 25"><path d="M16.500 1.500L2.500 12.500l14 11" fill="none" stroke="#9b9b9b" stroke-width="2.400" stroke-linecap="round" stroke-linejoin="round"/></svg>
<svg style="left:624px;top:230.5px;" width="19" height="25" viewBox="0 0 19 25"><path d="M2.500 1.500L16.500 12.500l-14 11" fill="none" stroke="#c6c6c6" stroke-width="2.400" stroke-linecap="round" stroke-linejoin="round"/></svg>
<div class="t " style="left:709.5px;top:231.0px;font-size:24.5px;color:#9d9d9d;-webkit-text-stroke:.4px #9d9d9d">C</div>
<div class="t " style="left:740px;top:231.5px;font-size:23.5px;color:#6d9cf6;">idle</div>
<svg style="left:862px;top:227px;" width="33" height="33" viewBox="0 0 33 33"><g fill="none" stroke="#aaa" stroke-width="2" stroke-linejoin="round" stroke-linecap="round"><path d="M9.500 7.500q6-6.500 14.500-4l5.500 4.500-2.500 4-4.500-2.500-3.500 1.500-2.500-3.500z"/><path d="M17 9.500L4.500 28.500q-1.500 2.500 1 3.500t3.500-1.500L19.500 12"/></g></svg>
<div class="t " style="left:900px;top:231.5px;font-size:23.6px;color:#b1b1b1;font-style:italic">Build Linux - Log</div>
<div class="abs" style="left:1116px;top:231px;width:1.5px;height:24px;background:#d4d4d4;"></div>
<div class="abs" style="left:506.5px;top:325.7px;width:1400px;height:1.5px;background:#dedede;"></div>
<svg style="left:523px;top:286.5px;" width="26" height="26" viewBox="0 0 26 26"><rect x="1" y="1" width="24" height="24" rx="5" fill="#a9c4f8" stroke="#8fb0f5" stroke-width="1.500"/><path d="M13 5.500L7 18M13 5.500L19 18M5.500 15h15M9 18h-3M20 18h-3" fill="none" stroke="#fff" stroke-width="2" stroke-linecap="round"/></svg>
<div class="t " style="left:560px;top:287.5px;font-size:23.5px;color:#d3d3d3;">Linux</div>
<div class="t " style="left:626.5px;top:290.9px;font-size:16.5px;color:#b4b4b4;font-family:'DejaVu Sans',sans-serif;-webkit-text-stroke:.8px #b4b4b4">❭</div>
<svg style="left:651.5px;top:288.5px;" width="24.5" height="20.5" viewBox="0 0 27 22"><path d="M0 4q0-3 3-3h6.500l3 3H24q3 0 3 3v12q0 3-3 3H3q-3 0-3-3z" fill="#cbcbcd"/><path d="M0 8.500h27" stroke="#fff" stroke-width="1.200"/></svg>
<div class="t " style="left:688px;top:287.5px;font-size:23.5px;color:#d3d3d3;">arch</div>
<div class="t " style="left:745px;top:290.9px;font-size:16.5px;color:#b4b4b4;font-family:'DejaVu Sans',sans-serif;-webkit-text-stroke:.8px #b4b4b4">❭</div>
<svg style="left:769.5px;top:288.5px;" width="24.5" height="20.5" viewBox="0 0 27 22"><path d="M0 4q0-3 3-3h6.500l3 3H24q3 0 3 3v12q0 3-3 3H3q-3 0-3-3z" fill="#cbcbcd"/><path d="M0 8.500h27" stroke="#fff" stroke-width="1.200"/></svg>
<div class="t " style="left:806px;top:287.5px;font-size:23.5px;color:#d3d3d3;">arm64</div>
<div class="t " style="left:886px;top:290.9px;font-size:16.5px;color:#b4b4b4;font-family:'DejaVu Sans',sans-serif;-webkit-text-stroke:.8px #b4b4b4">❭</div>
<svg style="left:911.5px;top:288.5px;" width="24.5" height="20.5" viewBox="0 0 27 22"><path d="M0 4q0-3 3-3h6.500l3 3H24q3 0 3 3v12q0 3-3 3H3q-3 0-3-3z" fill="#cbcbcd"/><path d="M0 8.500h27" stroke="#fff" stroke-width="1.200"/></svg>
<div class="t " style="left:948px;top:287.5px;font-size:23.5px;color:#d3d3d3;">kernel</div>
<div class="t " style="left:1024.5px;top:290.9px;font-size:16.5px;color:#b4b4b4;font-family:'DejaVu Sans',sans-serif;-webkit-text-stroke:.8px #b4b4b4">❭</div>
<div class="t " style="left:1054px;top:287.0px;font-size:24.5px;color:#b98be6;-webkit-text-stroke:.5px #b98be6">C</div>
<div class="t " style="left:1086px;top:287.5px;font-size:23.5px;color:#d3d3d3;">idle</div>
<div class="t " style="left:1136px;top:290.9px;font-size:16.5px;color:#b4b4b4;font-family:'DejaVu Sans',sans-serif;-webkit-text-stroke:.8px #b4b4b4">❭</div>
<svg style="left:1156px;top:283.5px;" width="31" height="31" viewBox="0 0 31 31"><rect width="31" height="31" rx="6" fill="#a5d99c"/></svg>
<div class="t " style="left:1165.5px;top:285.8px;font-size:25px;color:#fff;font-style:italic;font-weight:700;font-family:'Liberation Serif',serif">f</div>
<div class="t " style="left:1196px;top:287.5px;font-size:23.5px;color:#d3d3d3;">cpu_do_idle()</div>
<div class="abs" id="edclip" style="left:506.5px;top:327px;width:1400px;height:730px;overflow:hidden"><div class="abs" style="left:-506.5px;top:-327px;width:2940px;height:1912px">
<div class="abs" style="left:506.5px;top:398.2px;width:1400px;height:53px;background:#edf4fe;"></div>
<div class="abs" style="left:506.5px;top:974.1999999999999px;width:1400px;height:51.5px;background:#f0f4fb;"></div>
<div class="abs" style="left:506.5px;top:765.7px;width:1400px;height:52.3px;background:#e7f4e3;"></div>
<div class="abs" style="left:630px;top:300px;width:18px;height:95px;background:#e8e8e8;border-radius:0 0 9px 9px"></div>
<div class="abs" style="left:630px;top:454.5px;width:18px;height:567.5px;background:#e8e8e8;border-radius:9px"></div>
<div class="abs" style="left:630px;top:974.1999999999999px;width:18px;height:48.5px;background:#dde1e9;border-radius:0 0 9px 9px"></div>
<svg style="left:542px;top:765.7px;" width="123" height="52.3" viewBox="0 0 123 52.3"><path d="M8 0H107L121.500 23.900q1.300 2.200 0 4.500L107 52.300H8q-8 0-8-8V8q0-8 8-8z" fill="#3478f6"/><rect x="88" y="0" width="18" height="52.300" fill="#2c69e2"/></svg>
<div class="t" style="right:2323px;top:356.5px;font-size:32px;color:#a4a4a4;letter-spacing:-1.2px;-webkit-text-stroke:.3px #a4a4a4">23</div>
<div class="t" style="right:2323px;top:408.9px;font-size:32px;color:#1d1d1f;letter-spacing:-1.2px;-webkit-text-stroke:.3px #1d1d1f">24</div>
<div class="t" style="right:2323px;top:461.3px;font-size:32px;color:#a4a4a4;letter-spacing:-1.2px;-webkit-text-stroke:.3px #a4a4a4">25</div>
<div class="t" style="right:2323px;top:513.7px;font-size:32px;color:#a4a4a4;letter-spacing:-1.2px;-webkit-text-stroke:.3px #a4a4a4">26</div>
<div class="t" style="right:2323px;top:566.1px;font-size:32px;color:#a4a4a4;letter-spacing:-1.2px;-webkit-text-stroke:.3px #a4a4a4">27</div>
<div class="t" style="right:2323px;top:618.5px;font-size:32px;color:#a4a4a4;letter-spacing:-1.2px;-webkit-text-stroke:.3px #a4a4a4">28</div>
<div class="t" style="right:2323px;top:670.9px;font-size:32px;color:#a4a4a4;letter-spacing:-1.2px;-webkit-text-stroke:.3px #a4a4a4">29</div>
<div class="t" style="right:2323px;top:723.3px;font-size:32px;color:#a4a4a4;letter-spacing:-1.2px;-webkit-text-stroke:.3px #a4a4a4">30</div>
<div class="t" style="right:2323px;top:775.7px;font-size:32px;color:#fff;letter-spacing:-1.2px;-webkit-text-stroke:.3px #fff">31</div>
<div class="t" style="right:2323px;top:828.1px;font-size:32px;color:#a4a4a4;letter-spacing:-1.2px;-webkit-text-stroke:.3px #a4a4a4">32</div>
<div class="t" style="right:2323px;top:880.5px;font-size:32px;color:#a4a4a4;letter-spacing:-1.2px;-webkit-text-stroke:.3px #a4a4a4">33</div>
<div class="t" style="right:2323px;top:932.9px;font-size:32px;color:#a4a4a4;letter-spacing:-1.2px;-webkit-text-stroke:.3px #a4a4a4">34</div>
<div class="t" style="right:2323px;top:985.3px;font-size:32px;color:#a4a4a4;letter-spacing:-1.2px;-webkit-text-stroke:.3px #a4a4a4">35</div>
<div class="t" style="right:2323px;top:1037.7px;font-size:32px;color:#a4a4a4;letter-spacing:-1.2px;-webkit-text-stroke:.3px #a4a4a4">36</div>
<div class="t" style="right:2323px;top:1090.1px;font-size:32px;color:#a4a4a4;letter-spacing:-1.2px;-webkit-text-stroke:.3px #a4a4a4">37</div>
<div class="t" style="left:673.8px;top:350.9px;font-family:'DejaVu Sans Mono','Liberation Mono',monospace;font-size:32.8px;line-height:52.4px;color:#262626"><span style="color:#5d6c79"> */</span></div>
<div class="t" style="left:673.8px;top:403.3px;font-family:'DejaVu Sans Mono','Liberation Mono',monospace;font-size:32.8px;line-height:52.4px;color:#262626"><span style="color:#9b2393">void</span> __cpuidle <span style="color:#0f68a0">cpu_do_idle</span>(<span style="color:#9b2393">void</span>)</div>
<div class="t" style="left:673.8px;top:455.7px;font-family:'DejaVu Sans Mono','Liberation Mono',monospace;font-size:32.8px;line-height:52.4px;color:#262626">{</div>
<div class="t" style="left:673.8px;top:508.1px;font-family:'DejaVu Sans Mono','Liberation Mono',monospace;font-size:32.8px;line-height:52.4px;color:#262626">    <span style="color:#9b2393">struct</span> arm_cpuidle_irq_context context;</div>
<div class="t" style="left:673.8px;top:612.9px;font-family:'DejaVu Sans Mono','Liberation Mono',monospace;font-size:32.8px;line-height:52.4px;color:#262626">    <span style="color:#68401f">arm_cpuidle_save_irq_context</span>(&amp;context);</div>
<div class="t" style="left:673.8px;top:717.7px;font-family:'DejaVu Sans Mono','Liberation Mono',monospace;font-size:32.8px;line-height:52.4px;color:#262626">    <span style="color:#68401f">printk</span>(<span style="color:#68401f">KERN_INFO</span> <span style="color:#c41a16">"INFO from cpu_do_idle"</span>);</div>
<div class="t" style="left:673.8px;top:770.1px;font-family:'DejaVu Sans Mono','Liberation Mono',monospace;font-size:32.8px;line-height:52.4px;color:#262626">    <span style="border-bottom:3.500px solid #59b44f;display:inline-block;height:37px;line-height:40px;vertical-align:top;margin-top:7.500px">dsb</span>(sy);</div>
<div class="t" style="left:673.8px;top:822.5px;font-family:'DejaVu Sans Mono','Liberation Mono',monospace;font-size:32.8px;line-height:52.4px;color:#262626">    wfi();</div>
<div class="t" style="left:673.8px;top:927.3px;font-family:'DejaVu Sans Mono','Liberation Mono',monospace;font-size:32.8px;line-height:52.4px;color:#262626">    <span style="color:#68401f">arm_cpuidle_restore_irq_context</span>(&amp;context);</div>
<div class="t" style="left:673.8px;top:979.7px;font-family:'DejaVu Sans Mono','Liberation Mono',monospace;font-size:32.8px;line-height:52.4px;color:#262626">}</div>
<div class="t" style="left:771px;top:299.7px;font-family:'DejaVu Sans Mono','Liberation Mono',monospace;font-size:32.8px;line-height:52.4px;color:#5d6c79">controller).</div>
<div class="abs" style="left:1444px;top:765.7px;width:105.5px;height:52.3px;background:#b4e3ab;border-radius:8px 0 0 8px"></div>
<div class="abs" style="left:1552px;top:765.7px;width:400px;height:52.3px;background:#b7e5af;"></div>
<div class="t " style="left:1459px;top:774.4px;font-size:34px;color:#222;">2</div>
<svg style="left:1499.5px;top:783.5px;" width="29" height="16" viewBox="0 0 29 16"><path d="M0 1.500h29M0 8h29M0 14.500h29" stroke="#6d7a6b" stroke-width="2.200"/></svg>
<div class="t " style="left:1567.5px;top:773.8px;font-size:35.2px;color:#222;">Thread 2:</div>
</div></div>
<div class="abs" style="left:506.5px;top:1056.5px;width:1400px;height:1.5px;background:#d9d9d9;"></div>
<div class="abs" style="left:506.5px;top:1111.5px;width:1400px;height:1.5px;background:#d9d9d9;"></div>
<svg style="left:529px;top:1075.5px;" width="30" height="19" viewBox="0 0 30 19"><path d="M3 0h17.500q1.500 0 2.500 1L29 8q1 1.500 0 3l-6 7q-1 1-2.500 1H3q-3 0-3-3V3q0-3 3-3z" fill="#8cb0fa"/></svg>
<div class="abs" style="left:574px;top:1072px;width:1.5px;height:25px;background:#d4d4d4;"></div>
<div class="abs" style="left:584px;top:1067px;width:75px;height:35px;background:#e4e4e4;border-radius:17.500px"></div>
<div class="t " style="left:603px;top:1073.5px;font-size:22.5px;color:#6a6a6a;">Vim</div>
<div class="abs" style="left:668.5px;top:1072px;width:1.5px;height:25px;background:#d4d4d4;"></div>
<svg style="left:685px;top:1071.5px;" width="30" height="27" viewBox="0 0 30 27"><rect x="1.500" y="2" width="6" height="22.500" rx="1" fill="none" stroke="#a8a8a8" stroke-width="2.100" stroke-linejoin="round" stroke-linecap="round"/><path d="M13 2.500v21.500l15-10.750z" fill="none" stroke="#a8a8a8" stroke-width="2.100" stroke-linejoin="round" stroke-linecap="round"/></svg>
<svg style="left:746px;top:1073px;" width="30" height="26" viewBox="0 0 30 26"><path d="M2 15.500L13.500 4 25.500 13.500" fill="none" stroke="#a8a8a8" stroke-width="2.100" stroke-linejoin="round" stroke-linecap="round"/><path d="M26 6.500v7.500h-7.500" fill="none" stroke="#a8a8a8" stroke-width="2.100" stroke-linejoin="round" stroke-linecap="round"/><rect x="5.500" y="18.500" width="16.500" height="4.500" fill="none" stroke="#a8a8a8" stroke-width="2.100" stroke-linejoin="round" stroke-linecap="round"/></svg>
<svg style="left:807px;top:1071px;" width="26" height="28" viewBox="0 0 26 28"><path d="M13 1.500v15M6 10.500l7 6.500 7-6.500" fill="none" stroke="#a8a8a8" stroke-width="2.100" stroke-linejoin="round" stroke-linecap="round"/><rect x="4.300" y="21.500" width="17.400" height="4.500" fill="none" stroke="#a8a8a8" stroke-width="2.100" stroke-linejoin="round" stroke-linecap="round"/></svg>
<svg style="left:866px;top:1071px;" width="26" height="28" viewBox="0 0 26 28"><path d="M13 17.500v-15M6 8l7-6.500 7 6.500" fill="none" stroke="#a8a8a8" stroke-width="2.100" stroke-linejoin="round" stroke-linecap="round"/><rect x="4.300" y="21.500" width="17.400" height="4.500" fill="none" stroke="#a8a8a8" stroke-width="2.100" stroke-linejoin="round" stroke-linecap="round"/></svg>
<div class="abs" style="left:910.5px;top:1072px;width:1.5px;height:25px;background:#d4d4d4;"></div>
<svg style="left:928px;top:1072px;" width="27" height="26" viewBox="0 0 27 26"><rect x="1.500" y="1.500" width="24" height="6" rx="1.500" fill="none" stroke="#a8a8a8" stroke-width="2.100" stroke-linejoin="round" stroke-linecap="round"/><rect x="1.500" y="10" width="24" height="6" rx="1.500" fill="none" stroke="#a8a8a8" stroke-width="2.100" stroke-linejoin="round" stroke-linecap="round"/><rect x="1.500" y="18.500" width="24" height="6" rx="1.500" fill="none" stroke="#a8a8a8" stroke-width="2.100" stroke-linejoin="round" stroke-linecap="round"/></svg>
<svg style="left:988px;top:1071px;" width="28" height="28" viewBox="0 0 28 28"><circle cx="5.500" cy="5.500" r="4" fill="none" stroke="#a8a8a8" stroke-width="2.100" stroke-linejoin="round" stroke-linecap="round"/><circle cx="5.500" cy="22.500" r="4" fill="none" stroke="#a8a8a8" stroke-width="2.100" stroke-linejoin="round" stroke-linecap="round"/><circle cx="22.500" cy="14" r="4" fill="none" stroke="#a8a8a8" stroke-width="2.100" stroke-linejoin="round" stroke-linecap="round"/><path d="M9.500 6.500l9 5.500M9 21l9.500-5" fill="none" stroke="#a8a8a8" stroke-width="2.100" stroke-linejoin="round" stroke-linecap="round"/></svg>
<svg style="left:1048.5px;top:1071px;" width="28" height="28" viewBox="0 0 28 28"><path d="M26 2L2 12.500l10.500 2.500L15 26z" fill="none" stroke="#a8a8a8" stroke-width="2.100" stroke-linejoin="round" stroke-linecap="round"/></svg>
<div class="abs" style="left:1093px;top:1072px;width:1.5px;height:25px;background:#d4d4d4;"></div>
<svg style="left:1110.5px;top:1074px;" width="27" height="21" viewBox="0 0 27 21"><rect width="27" height="21" rx="3.500" fill="#7e7e7e"/><path d="M4.500 5.500l3.500 2.500-3.500 2.500" fill="none" stroke="#fff" stroke-width="1.500"/><path d="M9.500 11.500h4.500" stroke="#fff" stroke-width="1.500"/></svg>
<div class="t " style="left:1148.5px;top:1073.5px;font-size:22.5px;color:#d0d0d0;">Kernel</div>
<div class="t " style="left:1222px;top:1075.2px;font-size:19px;color:#b4b4b4;font-family:'DejaVu Sans',sans-serif;-webkit-text-stroke:.8px #b4b4b4">❭</div>
<svg style="left:1248px;top:1068.5px;" width="32" height="32" viewBox="0 0 32 32"><circle cx="16" cy="16" r="16" fill="#98b7f6"/><path d="M11.500 7.500v17M16 6v20M20.500 7.500v17" stroke="#fff" stroke-width="2.200"/></svg>
<div class="t " style="left:1289px;top:1073.4px;font-size:22.8px;color:#d0d0d0;">Thread 2</div>
<div class="t " style="left:1390px;top:1075.2px;font-size:19px;color:#b4b4b4;font-family:'DejaVu Sans',sans-serif;-webkit-text-stroke:.8px #b4b4b4">❭</div>
<svg style="left:1414px;top:1068.5px;" width="32" height="32" viewBox="0 0 32 32"><rect width="32" height="32" rx="6.500" fill="#dcc4a6"/><path fill="#fff" d="M16 6.800l1.900.2.700 2.500 1.500.650 2.300-1.250 1.400 1.300-1.100 2.350.650 1.500 2.450.85v1.900l-2.450.85-.650 1.500 1.100 2.350-1.400 1.300-2.300-1.250-1.500.650-.700 2.500-1.900.2-1.900-.2-.700-2.500-1.500-.650-2.300 1.250-1.400-1.300 1.100-2.350-.650-1.500-2.450-.85v-1.900l2.450-.85.650-1.500-1.100-2.350 1.400-1.300 2.300 1.250 1.500-.650.700-2.500zM16 12.300a3.700 3.700 0 100 7.400 3.700 3.700 0 000-7.400z"/></svg>
<div class="t " style="left:1454.5px;top:1073.0px;font-size:23.5px;color:#d0d0d0;">0 cpu_do_idle</div>
<div class="abs" style="left:1122px;top:1112.5px;width:1.5px;height:566px;background:#cfcfcf;"></div>
<svg style="left:538px;top:1133px;" width="12" height="18" viewBox="0 0 12 18"><path d="M2.5 2l7 7-7 7" fill="none" stroke="#6a6a6a" stroke-width="2.8" stroke-linecap="round" stroke-linejoin="round"/></svg>
<div class="abs" style="left:562px;top:1126.5px;width:31.5px;height:31.5px;background:#5cbb49;border-radius:6.500px"></div>
<div class="t " style="left:570.5px;top:1130.8px;font-size:23px;color:#fff;font-weight:700">L</div>
<div class="t " style="left:601px;top:1130.6px;font-size:23.4px;color:#262626;font-weight:700">context</div>
<div class="t " style="left:692px;top:1131.3px;font-size:21.9px;color:#3c3c3c;">(arm_cpuidle_irq_context)</div>
<div class="abs" style="left:1123.5px;top:1113px;width:800px;height:122px;background:#ecf0eb;"></div>
<div class="abs" style="left:1123.5px;top:1235px;width:800px;height:4px;background:#f4f5f4;"></div>
<div class="t" style="left:1134.500px;top:1115.5px;font-family:'DejaVu Sans Mono','Liberation Mono',monospace;font-size:25.5px;line-height:40px;color:#1f1f1f;-webkit-text-stroke:.4px #1f1f1f">User Command: target create</div>
<div class="t" style="left:1134.500px;top:1155.5px;font-family:'DejaVu Sans Mono','Liberation Mono',monospace;font-size:25.5px;line-height:40px;color:#1f1f1f;-webkit-text-stroke:.4px #1f1f1f">/Volumes/Work/linux-6.7.9/vmlinux</div>
<div class="t" style="left:1134.500px;top:1195.5px;font-family:'DejaVu Sans Mono','Liberation Mono',monospace;font-size:25.5px;line-height:40px;color:#1f1f1f;-webkit-text-stroke:.4px #1f1f1f">User Command: gdb-remote localhost:1234</div>
<div class="abs" style="left:1123.5px;top:1562.5px;width:800px;height:1.5px;background:#c9d6c7;"></div>
<div class="abs" style="left:1123.5px;top:1564px;width:800px;height:59px;background:#d4e5d2;"></div>
<div class="t" style="left:1134.500px;top:1573.500px;font-family:'DejaVu Sans Mono','Liberation Mono',monospace;font-size:25.5px;line-height:40px;color:#3f8f2e">(lldb)</div>
<div class="t " style="left:522px;top:1638.5px;font-size:23.5px;color:#262626;">Local</div>
<svg style="left:585.5px;top:1639px;" width="13" height="22" viewBox="0 0 13 22"><path d="M2 8l4.500-4.500L11 8M2 14l4.500 4.500L11 14" fill="none" stroke="#333" stroke-width="2.200" stroke-linecap="round" stroke-linejoin="round"/></svg>
<div class="abs" style="left:622px;top:1637.5px;width:1.5px;height:25px;background:#d4d4d4;"></div>
<svg style="left:641px;top:1639.5px;" width="31" height="21" viewBox="0 0 31 21"><path d="M1.500 10.500q14-18 28 0-14 18-28 0z" fill="none" stroke="#d2d2d2" stroke-width="2"/><circle cx="15.500" cy="10.500" r="4.500" fill="none" stroke="#d2d2d2" stroke-width="2"/></svg>
<svg style="left:697.5px;top:1637px;" width="27" height="27" viewBox="0 0 27 27"><circle cx="13.500" cy="13.500" r="12" fill="none" stroke="#d6d6d6" stroke-width="2"/><path d="M13.500 12v7.500" stroke="#d6d6d6" stroke-width="2.200" stroke-linecap="round"/><circle cx="13.500" cy="8" r="1.500" fill="#d6d6d6"/></svg>
<div class="abs" style="left:766px;top:1628px;width:345px;height:43px;background:#fff;border-radius:11px;box-shadow:0 0 0 1px #d6d6d6"></div>
<svg style="left:777px;top:1637px;" width="26" height="26" viewBox="0 0 26 26"><circle cx="13" cy="13" r="11.500" fill="none" stroke="#7d7d7d" stroke-width="2"/><path d="M7 9.500h12M9 13.500h8M11 17.500h4" stroke="#7d7d7d" stroke-width="1.900" stroke-linecap="round"/></svg>
<div class="t " style="left:810px;top:1638.5px;font-size:23.5px;color:#bcbcbc;">Filter</div>
<svg style="left:1139px;top:1639.5px;" width="31" height="21" viewBox="0 0 31 21"><path d="M1.500 10.500q14-18 28 0-14 18-28 0z" fill="none" stroke="#d2d2d2" stroke-width="2"/><circle cx="15.500" cy="10.500" r="4.500" fill="none" stroke="#d2d2d2" stroke-width="2"/></svg>
<svg style="left:1189px;top:1637.5px;" width="24" height="27" viewBox="0 0 24 27"><rect x="0" y="0" width="24" height="12" rx="6" fill="#7ea2f3"/><rect x="0" y="14.500" width="24" height="12" rx="6" fill="#7ea2f3"/><circle cx="6.500" cy="6" r="3" fill="#fff"/><circle cx="17.500" cy="20.500" r="3" fill="#fff"/></svg>
<div class="abs" style="left:1546px;top:1628px;width:345px;height:43px;background:#fff;border-radius:11px;box-shadow:0 0 0 1px #d6d6d6"></div>
<svg style="left:1555px;top:1638.5px;" width="52" height="24" viewBox="0 0 52 24"><rect x="1" y="1" width="50" height="22" rx="11" fill="none" stroke="#6f6f6f" stroke-width="2"/><path d="M9 8.500h13M11 12.500h9M13 16.500h5" stroke="#6f6f6f" stroke-width="1.900"/><path d="M32 10.500l4.500 4.500 4.500-4.500" fill="none" stroke="#555" stroke-width="2.200"/></svg>
<div class="t " style="left:1614px;top:1638.5px;font-size:23.5px;color:#bcbcbc;">Filter</div>
</div></div>
<div class="win" id="term">
 <div class="abs" style="left:0;top:0;width:1040px;height:58px;background:#38393b"></div>
 <div class="abs" style="left:16px;top:17px;width:24px;height:24px;border-radius:50%;background:#ed6a5e"></div>
 <div class="abs" style="left:24px;top:25px;width:8px;height:8px;border-radius:50%;background:#8c1a10"></div>
 <div class="abs" style="left:56px;top:17px;width:24px;height:24px;border-radius:50%;background:#f5bf4f"></div>
 <div class="abs" style="left:96px;top:17px;width:24px;height:24px;border-radius:50%;background:#61c554"></div>
 <div class="t" style="left:0;width:1040px;text-align:center;top:15px;font-size:27.2px;font-weight:700;color:#b4b4b6">tmux a -t qemu</div>
 <div class="t" style="left:957px;top:15px;font-size:25px;font-weight:700;color:#7d7d80;font-family:'Liberation Sans','DejaVu Sans',sans-serif">⌥⌘1</div>
 <!-- tab bar -->
 <div class="abs" style="left:0;top:57px;width:1040px;height:48px;background:#1c1c1d;border-top:2.5px solid #050505;border-bottom:2px solid #050505"></div>
 <div class="abs" style="left:327px;top:57px;width:332px;height:46px;background:#38393b;border-left:2px solid #2a2a2b;border-right:2px solid #0a0a0a"></div>
 <div class="abs" style="left:992px;top:60px;width:2px;height:43px;background:#3c3c3e"></div>
 <div class="t tabt" style="left:52px;color:#a9a9ab">Make your day!</div>
 <div class="abs tdot" style="left:248px"></div>
 <div class="t tabt" style="left:279px;color:#a9a9ab">⌘1</div>
 <div class="t tabt" style="left:388px;color:#fff;-webkit-text-stroke:.55px #fff;letter-spacing:.05px">Make your day!</div>
 <div class="t tabt" style="left:606px;color:#fff;-webkit-text-stroke:.5px #fff">⌘2</div>
 <div class="t tabt" style="left:712px;color:#a9a9ab">Make your day!</div>
 <div class="abs tdot" style="left:906px"></div>
 <div class="t tabt" style="left:937px;color:#a9a9ab">⌘3</div>
 <div class="abs" style="left:1004px;top:80px;width:23px;height:2px;background:#6a6a6c"></div>
 <div class="abs" style="left:1014.5px;top:69.5px;width:2px;height:23px;background:#6a6a6c"></div>
<pre id="tpre">[    0.457417] INFO from cpu_do_idle
[    0.457588] INFO from cpu_do_idle
[    0.457702] INFO from cpu_do_idle
[    0.457815] INFO from cpu_do_idle
[    0.461854] INFO from cpu_do_idle
[    0.461862] INFO from cpu_do_idle
[    0.462055] INFO from cpu_do_idle
[    0.466003] INFO from cpu_do_idle
[    0.466038] INFO from cpu_do_idle
[    0.469941] INFO from cpu_do_idle
[    0.469998] INFO from cpu_do_idle
[    0.474035] INFO from cpu_do_idle
[    0.478010] INFO from cpu_do_idle
[    0.482031] INFO from cpu_do_idle
[    0.486013] INFO from cpu_do_idle
[    0.490029] INFO from cpu_do_idle
[    0.494019] INFO from cpu_do_idle
[    0.556659] INFO from cpu_do_idle
[    1.052941] INFO from cpu_do_idle
[    1.058547] INFO from cpu_do_idle
[    1.062116] INFO from cpu_do_idle
[    1.066000] INFO from cpu_do_idle
[    1.066158] INFO from cpu_do_idle
[    1.066254] INFO from cpu_do_idle
[    1.066351] INFO from cpu_do_idle
[    1.066407] INFO from cpu_do_idle
[    1.066458] INFO from cpu_do_idle
[    1.066485] INFO from cpu_do_idle
[    1.066612] INFO from cpu_do_idle
[    1.067605] INFO from cpu_do_idle
[    1.212160] INFO from cpu_do_idle
[    1.353723] INFO from cpu_do_idle
[    1.574113] INFO from cpu_do_idle
[    1.57798</pre>
 <div class="abs" style="left:250px;top:1601px;width:20px;height:5px;background:#f2f2f2"></div>
 <div class="abs" style="left:10px;top:1605px;width:1020px;height:44px;background:#5abf39"></div>
 <div class="abs" style="left:330px;top:1605px;width:380px;height:44px;background:#b6d6fa"></div>
<pre id="tstat">[qemu] <span class="arr">←</span>system&gt;"macbook-air.local" 18:10 21-Jul-25</pre>
</div>
<div id="dock"></div>
<svg width="0" height="0" style="left:0;top:0"><defs>
<linearGradient id="gFinL" x1="0" y1="0" x2="0" y2="1"><stop offset="0" stop-color="#5ec0f8"/><stop offset="1" stop-color="#2f74ee"/></linearGradient>
<linearGradient id="gFinR" x1="0" y1="0" x2="0" y2="1"><stop offset="0" stop-color="#f2f4f8"/><stop offset="1" stop-color="#cfd7e6"/></linearGradient>
<linearGradient id="gSaf" x1="0" y1="0" x2="0" y2="1"><stop offset="0" stop-color="#2aa3f8"/><stop offset="1" stop-color="#1c68df"/></linearGradient>
<linearGradient id="gWht" x1="0" y1="0" x2="0" y2="1"><stop offset="0" stop-color="#fdfdfd"/><stop offset="1" stop-color="#e6e6e8"/></linearGradient>
<linearGradient id="gMsg" x1="0" y1="0" x2="0" y2="1"><stop offset="0" stop-color="#7bea7a"/><stop offset="1" stop-color="#3dc550"/></linearGradient>
<linearGradient id="gMus" x1="0" y1="0" x2="0" y2="1"><stop offset="0" stop-color="#f9627a"/><stop offset="1" stop-color="#e8333f"/></linearGradient>
<linearGradient id="gXc" x1="0" y1="0" x2="0" y2="1"><stop offset="0" stop-color="#3fa0f2"/><stop offset="1" stop-color="#2361dc"/></linearGradient>
<linearGradient id="gBallBg" x1="0" y1="0" x2="0" y2="1"><stop offset="0" stop-color="#c3dcfb"/><stop offset="1" stop-color="#a9adf6"/></linearGradient>
<radialGradient id="gBall" cx=".45" cy=".45" r=".6"><stop offset="0" stop-color="#6a4fc8"/><stop offset=".55" stop-color="#9a55d6"/><stop offset=".85" stop-color="#c160dc"/><stop offset="1" stop-color="#8d6ad8"/></radialGradient>
<linearGradient id="gTrash" x1="0" y1="0" x2="1" y2="0"><stop offset="0" stop-color="#c9ced3"/><stop offset=".45" stop-color="#f0f1f3"/><stop offset="1" stop-color="#c4c9cf"/></linearGradient>
<linearGradient id="gPhone" x1="0" y1="0" x2="1" y2="1"><stop offset="0" stop-color="#f7b9a8"/><stop offset=".45" stop-color="#e2655e"/><stop offset=".55" stop-color="#f4eadf"/><stop offset=".7" stop-color="#2f8fb4"/><stop offset="1" stop-color="#123a5c"/></linearGradient>
<clipPath id="cpIcon"><rect x="0" y="0" width="84" height="84" rx="19"/></clipPath>
</defs></svg>
<svg style="left:314px;top:1788px" width="84" height="84" viewBox="0 0 84 84"><g clip-path="url(#cpIcon)"><rect width="84" height="84" fill="url(#gFinL)"/><path d="M46 0Q33 24 34 49H46Q45.500 68 52 84H84V0z" fill="url(#gFinR)"/></g><path d="M34.300 48.700H46.300Q46 58 47.500 66" fill="none" stroke="#26344a" stroke-width="1.500" opacity=".8"/><rect x="20.300" y="23" width="3.300" height="9.500" rx="1.650" fill="#1e2a38"/><rect x="60.300" y="23" width="3.300" height="9.500" rx="1.650" fill="#1e2a38"/><path d="M16 56.500Q41 77 67.500 56.500" fill="none" stroke="#1e2a38" stroke-width="2.800" stroke-linecap="round"/></svg>
<div class="abs" style="left:352px;top:1889.5px;width:8px;height:8px;border-radius:50%;background:#0b0b0c"></div>
<svg style="left:426px;top:1788px" width="84" height="84" viewBox="0 0 84 84"><rect x="0" y="0" width="84" height="84" rx="19" fill="#c9cdd9" /><rect x="13.5" y="13.5" width="16" height="16" rx="4" fill="#5dd64a"/><rect x="34.0" y="13.5" width="16" height="16" rx="4" fill="#fbc634"/><rect x="54.5" y="13.5" width="16" height="16" rx="4" fill="#f5952c"/><rect x="13.5" y="34.0" width="16" height="16" rx="4" fill="#de3a2c"/><rect x="34.0" y="34.0" width="16" height="16" rx="4" fill="#aab4b9"/><rect x="54.5" y="34.0" width="16" height="16" rx="4" fill="#ee4a63"/><rect x="13.5" y="54.5" width="16" height="16" rx="4" fill="#a050e2"/><rect x="34.0" y="54.5" width="16" height="16" rx="4" fill="#3b9cf8"/><rect x="54.5" y="54.5" width="16" height="16" rx="4" fill="#5ed7b6"/></svg>
<svg style="left:538px;top:1788px" width="84" height="84" viewBox="0 0 84 84"><rect x="0" y="0" width="84" height="84" rx="19" fill="url(#gWht)" /><circle cx="42" cy="42" r="35.500" fill="url(#gSaf)"/><path d="M42 9v6.5" stroke="#fff" stroke-width="1" transform="rotate(0.0 42 42)" opacity=".9"/><path d="M42 9v3.5" stroke="#fff" stroke-width="1" transform="rotate(7.5 42 42)" opacity=".9"/><path d="M42 9v6.5" stroke="#fff" stroke-width="1" transform="rotate(15.0 42 42)" opacity=".9"/><path d="M42 9v3.5" stroke="#fff" stroke-width="1" transform="rotate(22.5 42 42)" opacity=".9"/><path d="M42 9v6.5" stroke="#fff" stroke-width="1" transform="rotate(30.0 42 42)" opacity=".9"/><path d="M42 9v3.5" stroke="#fff" stroke-width="1" transform="rotate(37.5 42 42)" opacity=".9"/><path d="M42 9v6.5" stroke="#fff" stroke-width="1" transform="rotate(45.0 42 42)" opacity=".9"/><path d="M42 9v3.5" stroke="#fff" stroke-width="1" transform="rotate(52.5 42 42)" opacity=".9"/><path d="M42 9v6.5" stroke="#fff" stroke-width="1" transform="rotate(60.0 42 42)" opacity=".9"/><path d="M42 9v3.5" stroke="#fff" stroke-width="1" transform="rotate(67.5 42 42)" opacity=".9"/><path d="M42 9v6.5" stroke="#fff" stroke-width="1" transform="rotate(75.0 42 42)" opacity=".9"/><path d="M42 9v3.5" stroke="#fff" stroke-width="1" transform="rotate(82.5 42 42)" opacity=".9"/><path d="M42 9v6.5" stroke="#fff" stroke-width="1" transform="rotate(90.0 42 42)" opacity=".9"/><path d="M42 9v3.5" stroke="#fff" stroke-width="1" transform="rotate(97.5 42 42)" opacity=".9"/><path d="M42 9v6.5" stroke="#fff" stroke-width="1" transform="rotate(105.0 42 42)" opacity=".9"/><path d="M42 9v3.5" stroke="#fff" stroke-width="1" transform="rotate(112.5 42 42)" opacity=".9"/><path d="M42 9v6.5" stroke="#fff" stroke-width="1" transform="rotate(120.0 42 42)" opacity=".9"/><path d="M42 9v3.5" stroke="#fff" stroke-width="1" transform="rotate(127.5 42 42)" opacity=".9"/><path d="M42 9v6.5" stroke="#fff" stroke-width="1" transform="rotate(135.0 42 42)" opacity=".9"/><path d="M42 9v3.5" stroke="#fff" stroke-width="1" transform="rotate(142.5 42 42)" opacity=".9"/><path d="M42 9v6.5" stroke="#fff" stroke-width="1" transform="rotate(150.0 42 42)" opacity=".9"/><path d="M42 9v3.5" stroke="#fff" stroke-width="1" transform="rotate(157.5 42 42)" opacity=".9"/><path d="M42 9v6.5" stroke="#fff" stroke-width="1" transform="rotate(165.0 42 42)" opacity=".9"/><path d="M42 9v3.5" stroke="#fff" stroke-width="1" transform="rotate(172.5 42 42)" opacity=".9"/><path d="M42 9v6.5" stroke="#fff" stroke-width="1" transform="rotate(180.0 42 42)" opacity=".9"/><path d="M42 9v3.5" stroke="#fff" stroke-width="1" transform="rotate(187.5 42 42)" opacity=".9"/><path d="M42 9v6.5" stroke="#fff" stroke-width="1" transform="rotate(195.0 42 42)" opacity=".9"/><path d="M42 9v3.5" stroke="#fff" stroke-width="1" transform="rotate(202.5 42 42)" opacity=".9"/><path d="M42 9v6.5" stroke="#fff" stroke-width="1" transform="rotate(210.0 42 42)" opacity=".9"/><path d="M42 9v3.5" stroke="#fff" stroke-width="1" transform="rotate(217.5 42 42)" opacity=".9"/><path d="M42 9v6.5" stroke="#fff" stroke-width="1" transform="rotate(225.0 42 42)" opacity=".9"/><path d="M42 9v3.5" stroke="#fff" stroke-width="1" transform="rotate(232.5 42 42)" opacity=".9"/><path d="M42 9v6.5" stroke="#fff" stroke-width="1" transform="rotate(240.0 42 42)" opacity=".9"/><path d="M42 9v3.5" stroke="#fff" stroke-width="1" transform="rotate(247.5 42 42)" opacity=".9"/><path d="M42 9v6.5" stroke="#fff" stroke-width="1" transform="rotate(255.0 42 42)" opacity=".9"/><path d="M42 9v3.5" stroke="#fff" stroke-width="1" transform="rotate(262.5 42 42)" opacity=".9"/><path d="M42 9v6.5" stroke="#fff" stroke-width="1" transform="rotate(270.0 42 42)" opacity=".9"/><path d="M42 9v3.5" stroke="#fff" stroke-width="1" transform="rotate(277.5 42 42)" opacity=".9"/><path d="M42 9v6.5" stroke="#fff" stroke-width="1" transform="rotate(285.0 42 42)" opacity=".9"/><path d="M42 9v3.5" stroke="#fff" stroke-width="1" transform="rotate(292.5 42 42)" opacity=".9"/><path d="M42 9v6.5" stroke="#fff" stroke-width="1" transform="rotate(300.0 42 42)" opacity=".9"/><path d="M42 9v3.5" stroke="#fff" stroke-width="1" transform="rotate(307.5 42 42)" opacity=".9"/><path d="M42 9v6.5" stroke="#fff" stroke-width="1" transform="rotate(315.0 42 42)" opacity=".9"/><path d="M42 9v3.5" stroke="#fff" stroke-width="1" transform="rotate(322.5 42 42)" opacity=".9"/><path d="M42 9v6.5" stroke="#fff" stroke-width="1" transform="rotate(330.0 42 42)" opacity=".9"/><path d="M42 9v3.5" stroke="#fff" stroke-width="1" transform="rotate(337.5 42 42)" opacity=".9"/><path d="M42 9v6.5" stroke="#fff" stroke-width="1" transform="rotate(345.0 42 42)" opacity=".9"/><path d="M42 9v3.5" stroke="#fff" stroke-width="1" transform="rotate(352.5 42 42)" opacity=".9"/><path d="M69 15L39.300 39.300l5.400 5.400z" fill="#e9483f"/><path d="M15 69L44.700 44.700l-5.400-5.400z" fill="#f6f6f6"/></svg>
<div class="abs" style="left:576px;top:1889.5px;width:8px;height:8px;border-radius:50%;background:#0b0b0c"></div>
<svg style="left:650px;top:1788px" width="84" height="84" viewBox="0 0 84 84"><rect x="0" y="0" width="84" height="84" rx="19" fill="url(#gMsg)" /><ellipse cx="42" cy="40" rx="30" ry="25" fill="#f3fbf2"/><path d="M24 58q-1 7-6 10 9 0 14-6z" fill="#f3fbf2"/><circle cx="78.500" cy="9.500" r="20" fill="#e7483b"/><text x="78.500" y="18.500" text-anchor="middle" font-family="Liberation Sans,sans-serif" font-size="25" fill="#fff">2</text></svg>
<div class="abs" style="left:688px;top:1889.5px;width:8px;height:8px;border-radius:50%;background:#0b0b0c"></div>
<svg style="left:762px;top:1788px" width="84" height="84" viewBox="0 0 84 84"><rect x="0" y="0" width="84" height="84" rx="19" fill="url(#gMus)" /><path d="M32 22.500l29-7v37.500a8.500 7 0 11-5-6.400V27.500l-19 4.700v26.800a8.500 7 0 11-5-6.400z" fill="#fff"/></svg>
<svg style="left:874px;top:1788px" width="84" height="84" viewBox="0 0 84 84"><rect x="0" y="0" width="84" height="84" rx="19" fill="url(#gWht)" /><rect x="32.300" y="5" width="19.400" height="35" rx="9.700" fill="#f59a23" opacity=".86" transform="rotate(0 42 42)"/><rect x="32.300" y="5" width="19.400" height="35" rx="9.700" fill="#f0d42f" opacity=".86" transform="rotate(45 42 42)"/><rect x="32.300" y="5" width="19.400" height="35" rx="9.700" fill="#8fc93f" opacity=".86" transform="rotate(90 42 42)"/><rect x="32.300" y="5" width="19.400" height="35" rx="9.700" fill="#46b893" opacity=".86" transform="rotate(135 42 42)"/><rect x="32.300" y="5" width="19.400" height="35" rx="9.700" fill="#3f8de0" opacity=".86" transform="rotate(180 42 42)"/><rect x="32.300" y="5" width="19.400" height="35" rx="9.700" fill="#7a68d2" opacity=".86" transform="rotate(225 42 42)"/><rect x="32.300" y="5" width="19.400" height="35" rx="9.700" fill="#cc66b4" opacity=".86" transform="rotate(270 42 42)"/><rect x="32.300" y="5" width="19.400" height="35" rx="9.700" fill="#ea4f3d" opacity=".86" transform="rotate(315 42 42)"/></svg>
<svg style="left:986px;top:1788px" width="84" height="84" viewBox="0 0 84 84"><g clip-path="url(#cpIcon)"><rect width="84" height="84" fill="#fbfbfb"/><rect width="84" height="25" fill="#e9544b"/></g><text x="42" y="20" text-anchor="middle" font-family="Liberation Sans,Noto Sans CJK SC,sans-serif" font-weight="700" font-size="17" fill="#fff">7月</text><text x="40.500" y="71" text-anchor="middle" font-family="Liberation Sans,sans-serif" font-size="51.500" fill="#2b2b2b" letter-spacing="-3.500" style="-webkit-text-stroke:2.300px #fbfbfb">21</text></svg>
<svg style="left:1098px;top:1788px" width="84" height="84" viewBox="0 0 84 84"><g clip-path="url(#cpIcon)"><rect width="84" height="84" fill="#fbe190"/><path d="M4 14h76" stroke="#e9c46a" stroke-width="1.200"/><path d="M4 21h76" stroke="#e9c46a" stroke-width="1.200"/><path d="M4 28h76" stroke="#e9c46a" stroke-width="1.200"/><path d="M4 35h76" stroke="#e9c46a" stroke-width="1.200"/><path d="M4 42h76" stroke="#e9c46a" stroke-width="1.200"/><path d="M4 49h76" stroke="#e9c46a" stroke-width="1.200"/><path d="M4 56h76" stroke="#e9c46a" stroke-width="1.200"/><path d="M4 63h76" stroke="#e9c46a" stroke-width="1.200"/><path d="M4 70h76" stroke="#e9c46a" stroke-width="1.200"/><path d="M4 77h76" stroke="#e9c46a" stroke-width="1.200"/><path d="M84 60L60 84h24z" fill="#5c708a"/><path d="M84 60q-16-2-20 8t-4 16q10-4 24-24z" fill="#f3e9a2"/></g><rect x="9" y="11" width="23" height="22" rx="2" fill="#f2b441"/><text x="20.500" y="26.500" text-anchor="middle" font-family="Liberation Sans,sans-serif" font-size="11.500" fill="#fdf0c8">PDF</text><g transform="rotate(17 54 44)" fill="rgba(70,70,70,.28)" stroke="#17171a" stroke-width="5" stroke-linejoin="round" stroke-linecap="round"><rect x="46" y="2" width="21" height="28" rx="8"/><rect x="41" y="46" width="21" height="30" rx="8"/><path d="M56 30l-3 16" fill="none" stroke-width="4.500"/><path d="M67 10l8-3M62 70l6 8" fill="none" stroke-width="4"/></g></svg>
<svg style="left:1210px;top:1788px" width="84" height="84" viewBox="0 0 84 84"><rect x="16" y="-8" width="26" height="12" fill="#c45f9a"/><rect x="-7" y="38" width="10" height="25" fill="#ee8a4a"/><rect x="80" y="17" width="11" height="26" fill="#8a84e8"/><rect x="80" y="43" width="8" height="13" fill="#6aa9e8"/><rect x="0" y="0" width="84" height="84" rx="19" fill="url(#gWht)" /><text x="42" y="66.500" text-anchor="middle" font-family="Liberation Sans,sans-serif" font-weight="700" font-size="69" fill="#dc3e46" transform="translate(42 0) scale(1.060 1) translate(-42 0)">Z</text><path d="M84 62q-14-2-19 6t-5 16q14-2 24-22z" fill="#f1f1f3"/><path d="M63 70h14M62 74h12M61 78h9" stroke="#e8d36a" stroke-width="1.500"/></svg>
<svg style="left:1322px;top:1788px" width="84" height="84" viewBox="0 0 84 84"><rect x="0" y="0" width="84" height="84" rx="19" fill="#a9b8bd"/><rect x="4" y="4" width="76" height="76" rx="15" fill="#10181b"/><text x="13" y="37" font-family="DejaVu Sans Mono,monospace" font-weight="700" font-size="24" fill="#5cd34a">$</text><rect x="30" y="15" width="3.500" height="24" fill="#49b83e"/></svg>
<div class="abs" style="left:1360px;top:1889.5px;width:8px;height:8px;border-radius:50%;background:#0b0b0c"></div>
<svg style="left:1434px;top:1788px" width="84" height="84" viewBox="0 0 84 84"><rect x="0" y="0" width="84" height="84" rx="19" fill="url(#gXc)" /><rect x="4" y="4" width="76" height="76" rx="15" fill="none" stroke="#8cc4fa" stroke-width="1.300"/><circle cx="42" cy="42" r="30" fill="none" stroke="#7db6f5" stroke-width="1" opacity=".7"/><g fill="none" stroke="#d7e9fd" stroke-width="5" stroke-linecap="round"><path d="M40 18L18 63M36 18L62 63M13 50h58"/></g><g fill="none" stroke="#3a8df0" stroke-width="2" stroke-linecap="round"><path d="M40 18L18 63M36 18L62 63M13 50h58"/></g><path d="M33 84L60 35" stroke="#2e3035" stroke-width="12.500" stroke-linecap="round"/><path d="M59 37L72 13" stroke="#5a5d63" stroke-width="9"/><path d="M47-2.500Q62-9 78 2l9 4q4 0 6 4l-5 10q-3 1-5-1l-7-4-4 6-14-8 5-7q-6-7-17-8.500z" fill="#4c4f55"/><path d="M47-2.500Q62-9 78 2l9 4" fill="none" stroke="#7a7d83" stroke-width="1.500"/></svg>
<div class="abs" style="left:1472px;top:1889.5px;width:8px;height:8px;border-radius:50%;background:#0b0b0c"></div>
<svg style="left:1546px;top:1788px" width="84" height="84" viewBox="0 0 84 84"><rect x="0" y="0" width="84" height="84" rx="19" fill="#fefefe" /><path d="M11.200 48L54.600 12.900V29.900L17 58l-5.800-5z" fill="#2565ad"/><path d="M11.200 36L17 26l37.600 28V71z" fill="#337cc9"/><path d="M54.600 12.900L70 21V63L54.600 71z" fill="#4a9be9"/></svg>
<div class="abs" style="left:1584px;top:1889.5px;width:8px;height:8px;border-radius:50%;background:#0b0b0c"></div>
<svg style="left:1658px;top:1788px" width="84" height="84" viewBox="0 0 84 84"><rect x="0" y="0" width="84" height="84" rx="19" fill="#474748" /><path d="M19.700 26.900L63.800 12.900V28L46 34l17.800 6.500V57L19.700 71V55L37.400 50 19.700 43.500z" fill="#f59b30"/><path d="M37.400 50L63.800 57 50 61.400z" fill="#e38a22"/></svg>
<div class="abs" style="left:1696px;top:1889.5px;width:8px;height:8px;border-radius:50%;background:#0b0b0c"></div>
<svg style="left:1770px;top:1788px" width="84" height="84" viewBox="0 0 84 84"><path d="M8 80v12l8-4 8 4V80z" fill="#d8453c"/><rect x="1" y="1" width="82" height="82" rx="19" fill="#a34a44"/><rect x="1" y="1" width="82" height="82" rx="19" fill="none" stroke="#8c3933" stroke-width="1.500"/><text x="43.500" y="56.500" text-anchor="middle" font-family="Noto Serif CJK SC,Noto Sans CJK SC,serif" font-weight="700" font-size="38" fill="#fbf4ee">词</text></svg>
<svg style="left:1882px;top:1788px" width="84" height="84" viewBox="0 0 84 84"><rect x="0" y="0" width="84" height="84" rx="19" fill="#c8cdd1" /><rect x="25" y="6" width="35" height="72" rx="8" fill="#17181a"/><rect x="27.500" y="8.500" width="30" height="67" rx="6" fill="url(#gPhone)"/><rect x="36" y="10.500" width="13" height="4" rx="2" fill="#17181a"/></svg>
<div class="abs" style="left:2004px;top:1786px;width:2px;height:98px;background:#34414f"></div>
<svg style="left:2044px;top:1788px" width="84" height="84" viewBox="0 0 84 84"><rect x="0" y="0" width="84" height="84" rx="19" fill="#fefefe" /><rect x="22" y="14" width="47" height="56" rx="3" fill="#bf6be3"/><rect x="56" y="30" width="13" height="13" fill="#a349d0"/><rect x="56" y="43" width="13" height="13" fill="#8a35c0"/><rect x="56" y="56" width="13" height="14" fill="#6f1fa8"/><rect x="7" y="27" width="31" height="31" rx="3" fill="#7a1fb0"/><text x="22.500" y="51" text-anchor="middle" font-family="Liberation Sans,sans-serif" font-weight="700" font-size="24" fill="#fff">N</text></svg>
<div class="abs" style="left:2082px;top:1889.5px;width:8px;height:8px;border-radius:50%;background:#0b0b0c"></div>
<svg style="left:2156px;top:1788px" width="84" height="84" viewBox="0 0 84 84"><rect x="0" y="0" width="84" height="84" rx="19" fill="url(#gBallBg)" /><circle cx="42" cy="42" r="30.500" fill="url(#gBall)"/><ellipse cx="36" cy="27" rx="17" ry="10" fill="#c9a8f2" opacity=".2"/></svg>
<div class="abs" style="left:2280px;top:1786px;width:2px;height:98px;background:#34414f"></div>
<svg style="left:2314px;top:1788px" width="84" height="84" viewBox="0 0 84 84"><path d="M13.900 30.800L30 12 58.600-4.500 71.400 29 38.400 44z" fill="#f8e2ad"/><path d="M13.900 30.800L30 12 58.600-4.500 38.400 44z" fill="#fcebc0"/><path d="M13.900 30.800L38.400 44V87L13.900 72.800z" fill="#fdeec5"/><path d="M38.400 44L71.400 29V69.500L38.400 87z" fill="#f5dc9f"/><path d="M13.900 57q2 5 4.500 0t4 4 4-3 4 6 4-2 4 5V87L13.900 72.800z" fill="#b9cff3"/><path d="M38.400 66q3-2 5 3t5-8 5 4 5-9 5 3 8-10V69.500L38.400 87z" fill="#9cb9e6"/><circle cx="54.200" cy="16.700" r="6.500" fill="#a3bbe9"/><circle cx="55.200" cy="16" r="4" fill="#8fa9dc"/></svg>
<svg style="left:2430px;top:1788px" width="84" height="84" viewBox="0 0 84 84"><path d="M8 22L38 12l5-2 14-4q3-1 4 2l4 14z" fill="#f4f4f6"/><rect x="52" y="10" width="14" height="16" fill="#dcdde0"/><path d="M26 6l22-4q3 0 3 3l-1 9-22 3z" fill="#121214"/><rect x="31" y="7.500" width="6" height="3" fill="#f2d634"/><rect x="40" y="6.500" width="6" height="3" fill="#f2d634"/><path d="M-2 26q0-5 5-5h22q3 0 5 2l3 3h48q5 0 5 5v46q0 5-5 5H3q-5 0-5-5z" fill="#5fa9e6"/><rect x="-2" y="29" width="88" height="55" rx="5" fill="#8acdf8"/><path d="M-2 78h88" stroke="#6fb6ee" stroke-width="2"/></svg>
<svg style="left:2542px;top:1788px" width="84" height="84" viewBox="0 0 84 84"><path d="M5-1h74l-6.500 76q-1 12-12 13H23.500q-11-1-12-13z" fill="url(#gTrash)" opacity=".96"/><ellipse cx="42" cy="-1" rx="37" ry="7" fill="#c8cdd3"/><ellipse cx="42" cy="-.500" rx="34.500" ry="5.300" fill="#aab1b9" opacity=".7"/></svg>
<div id="menubar">
 <svg style="left:41px;top:18px" width="27" height="33" viewBox="0 0 27 33"><path d="M22.300 17.500c0-4.200 3.400-6.200 3.600-6.300-2-2.900-5-3.300-6.100-3.300-2.600-.300-5 1.500-6.300 1.500s-3.300-1.500-5.500-1.400c-2.800 0-5.400 1.600-6.900 4.200-2.900 5.100-.700 12.600 2.100 16.700 1.400 2 3 4.300 5.200 4.200 2.100-.1 2.900-1.300 5.400-1.300s3.200 1.300 5.400 1.300c2.200 0 3.700-2 5-4.100 1.600-2.300 2.200-4.600 2.300-4.700-.100 0-4.200-1.600-4.200-6.800zM18.200 5.300c1.100-1.400 1.900-3.300 1.700-5.300-1.600.1-3.600 1.100-4.800 2.500-1 1.200-2 3.200-1.700 5 1.800.1 3.700-.900 4.800-2.200z" fill="#fff"/></svg>
 <div class="t" style="left:108px;font-weight:700;font-size:27.400px">iTerm2</div>
 <div class="t" style="left:238.500px;letter-spacing:-.8px">Shell</div>
 <div class="t" style="left:338.500px;letter-spacing:-.9px">Edit</div>
 <div class="t" style="left:426px;letter-spacing:-.8px">View</div>
 <div class="t" style="left:526px;letter-spacing:-.4px">Session</div>
 <div class="t" style="left:662px;letter-spacing:-.6px">Scripts</div>
 <div class="t" style="left:788.500px;letter-spacing:-.7px">Profiles</div>
 <div class="t" style="left:920.500px;letter-spacing:-.4px">Toolbelt</div>
 <div class="t" style="left:1058.500px;letter-spacing:-.9px">Window</div>
 <div class="t" style="left:1196px;letter-spacing:-.9px">Help</div>
 <svg style="left:2077px;top:20px" width="30" height="33" viewBox="0 0 30 33"><path d="M13.300 13.300q1.700-1 3.400 0l10 6q1.700 1.200 0 2.400l-10 6.500q-1.700 1-3.400 0l-10-6.500q-1.700-1.200 0-2.400z" fill="none" stroke="#fff" stroke-width="2.500" stroke-linejoin="round"/><path d="M13.300 2.300q1.700-1 3.400 0l10 6q1.700 1.200 0 2.400l-10 6.500q-1.700 1-3.400 0l-10-6.500q-1.700-1.200 0-2.400z" fill="#74a4bb" stroke="#fff" stroke-width="2.500" stroke-linejoin="round"/></svg>
 <svg style="left:2152px;top:21px" width="42" height="32" viewBox="0 0 42 32"><path d="M7 20q0-19 14-19t14 19q7 1.500 7 5.500 0 6-21 6T0 25.500q0-4 7-5.500z" fill="#f2f4f6"/></svg>
 <svg style="left:2242px;top:20px" width="44" height="32" viewBox="0 0 44 32"><rect x="1.300" y="1.300" width="41.400" height="29.400" rx="4.500" fill="none" stroke="#fff" stroke-width="2.600"/></svg>
 <div class="t" style="left:2254px;top:23.500px;font-size:25px;font-weight:700">A</div>
 <div class="t" style="left:2324.500px;top:23.500px;font-size:24px;letter-spacing:-1.400px">100%</div>
 <svg style="left:2391px;top:24px" width="51" height="24" viewBox="0 0 51 24"><rect x="1" y="1" width="43" height="22" rx="6.500" fill="none" stroke="#fff" stroke-opacity=".55" stroke-width="2"/><rect x="3.800" y="3.800" width="37.400" height="16.400" rx="4" fill="#fff"/><path d="M46.500 8q3 .500 3 4t-3 4z" fill="#fff" fill-opacity=".55"/><path d="M25 .500L13.500 13.500h8L19 23.500 31.500 10h-8.500z" fill="#fff" stroke="#7dabbe" stroke-width="2.200"/></svg>
 <svg style="left:2481px;top:22px" width="36" height="26" viewBox="0 0 36 26"><g fill="none" stroke="#fff" stroke-width="3.400" stroke-linecap="round"><path d="M2.500 9.500q15.500-14 31 0"/><path d="M8 15.500q10-9 20 0"/></g><path d="M12.500 20.500q5.500-5 11 0l-5.500 5.500z" fill="#fff"/></svg>
 <svg style="left:2556.500px;top:22.500px" width="28" height="27" viewBox="0 0 28 27"><rect x="1.300" y="1.300" width="25.400" height="10.400" rx="5.200" fill="none" stroke="#fff" stroke-width="2.600"/><circle cx="7.300" cy="6.500" r="3" fill="#fff"/><rect x="0" y="15" width="28" height="12" rx="6" fill="#fff"/><circle cx="21" cy="21" r="3.300" fill="#7dabbe"/></svg>
 <div class="t" style="left:2620.500px;top:21px;font-size:27.300px;font-family:'Liberation Sans','Noto Sans CJK SC',sans-serif;letter-spacing:-.05px">7月21日 周一  下午6:10</div>
</div>
</body>
</html>
